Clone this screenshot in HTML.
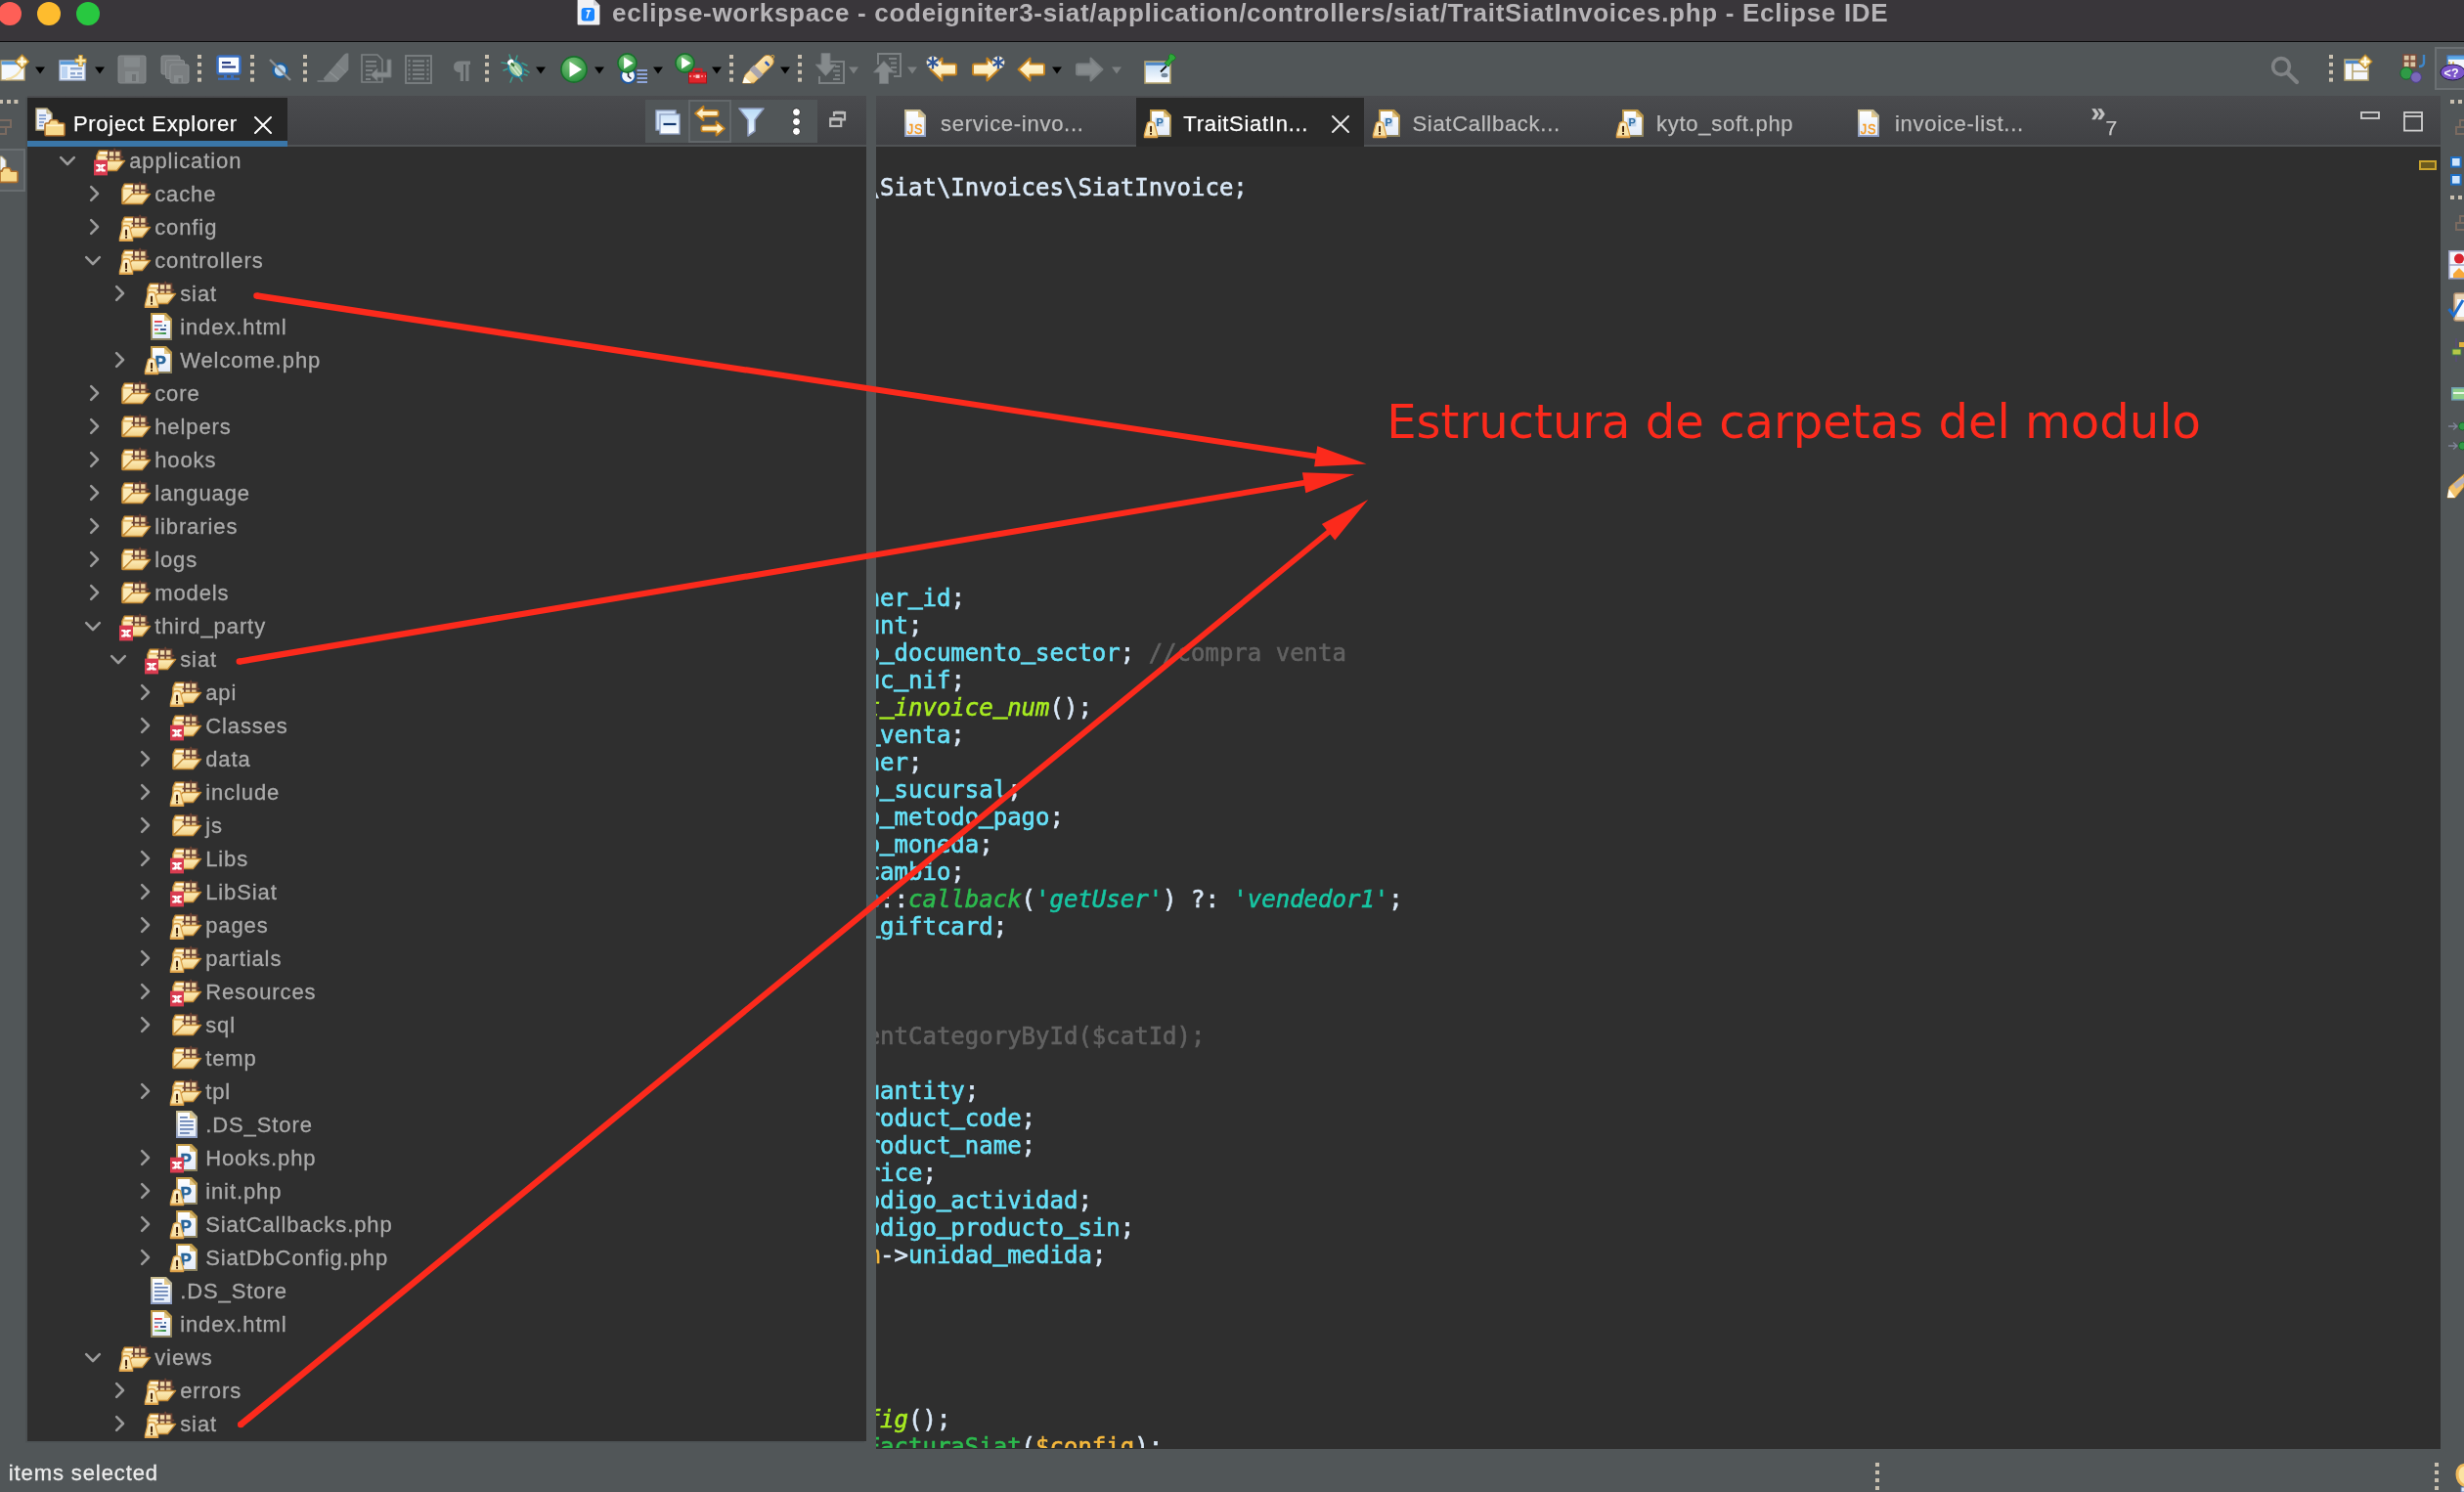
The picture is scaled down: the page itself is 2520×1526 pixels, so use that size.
<!DOCTYPE html><html><head><meta charset="utf-8"><title>Eclipse IDE</title><style>
*{margin:0;padding:0;box-sizing:content-box}
html,body{width:2520px;height:1526px;overflow:hidden;background:#515658}
body{position:relative;font-family:"Liberation Sans",sans-serif;font-size:22px;letter-spacing:.9px;color:#aaa}
.ic{position:absolute;overflow:visible}
#title{position:absolute;left:0;top:0;width:2520px;height:41.5px;background:#39363a;border-bottom:1.8px solid #0b0b0c}
#title .tx{position:absolute;left:626px;top:-3.5px;line-height:32px;font-size:26px;font-weight:bold;color:#b6b4b7;letter-spacing:.7px;white-space:nowrap}
.tlight{position:absolute;top:1.8px;width:24px;height:24px;border-radius:50%}
#pe{position:absolute;left:28px;top:98px;width:858px;height:1376px;background:#2f2f2f;overflow:hidden;box-shadow:-2px 1.5px 0 #4b5052}
#petab{position:absolute;left:0;top:0;width:858px;height:52px;background:linear-gradient(#4a4b4e,#404144);border-bottom:2px solid #505355;box-sizing:border-box}
#ed{position:absolute;left:896px;top:98px;width:1600px;height:1383.5px;background:#2f2f2f;overflow:hidden}
#edtab{position:absolute;left:0;top:0;width:1600px;height:52px;background:linear-gradient(#4a4b4e,#404144);border-bottom:2px solid #505355;box-sizing:border-box}
#code{position:absolute;left:0;top:52px;width:1600px;height:1331px;overflow:hidden}
.cl{position:absolute;left:-10.35px;height:28px;line-height:28px;font-family:"DejaVu Sans Mono","Liberation Mono",monospace;font-size:24px;letter-spacing:0;white-space:pre;-webkit-text-stroke:.6px}
.u{position:relative;top:-3.4px;-webkit-text-stroke:1.3px}
.tl{position:absolute;height:34px;line-height:34px;white-space:nowrap;color:#aaaaaa;-webkit-text-stroke:.3px}
.tt{position:absolute;height:32px;line-height:32px;white-space:nowrap;color:#bdbdbd;letter-spacing:.72px;-webkit-text-stroke:.25px}
.tt.act{color:#fff}
#wrap{position:absolute;left:0;top:0;width:2520px;height:1526px;overflow:hidden;will-change:transform}
#status{position:absolute;left:-11.4px;top:1491px;line-height:32px;color:#ececec;white-space:nowrap;-webkit-text-stroke:.3px}
</style></head><body><div id="wrap">
<div id="title"><div class="tlight" style="left:-2px;background:#fe5f57"></div><div class="tlight" style="left:38px;background:#febc2e"></div><div class="tlight" style="left:78px;background:#28c840"></div>
<svg class="ic" style="left:590px;top:-1px" width="24" height="27" viewBox="0 0 24 27" ><path d="M0.6 0 H17 L23.4 6.4 V25.4 Q23.4 26.4 22.4 26.4 H1.6 Q0.6 26.4 0.6 25.4 Z" fill="#f1f1f3"/><path d="M17 0 V6.4 H23.4 Z" fill="#cfcfd4"/><rect x="4.6" y="9" width="13.4" height="13.4" rx="3" fill="#1a86ff"/><path d="M9.6 12 H14.2 M12.4 12 L10.2 19.6" stroke="#fff" stroke-width="1.5" fill="none"/></svg>
<div class="tx">eclipse-workspace - codeigniter3-siat/application/controllers/siat/TraitSiatInvoices.php - Eclipse IDE</div></div>
<svg class="ic" style="left:0px;top:56px" width="30" height="28" viewBox="0 0 30 28" ><rect x="1" y="6" width="24" height="20" fill="#f4f8fd" stroke="#b9a471" stroke-width="1.4"/><rect x="1.6" y="6.6" width="22.8" height="3.6" fill="#5b9bd8"/><path d="M6 25 Q18 24 23 12" stroke="#f3dfa6" stroke-width="2" fill="none"/><path d="M22.5 0 L29.5 7 L22.5 14 L15.5 7 Z" fill="#e9c46a" stroke="#b8862b" stroke-width="1.2"/><path d="M22.5 2.6 V11.4 M18.1 7 H26.9" stroke="#fffbe8" stroke-width="2.4"/></svg>
<svg class="ic" style="left:36px;top:68px" width="10" height="8" viewBox="0 0 10 8" ><path d="M0 0.5 H10 L5 7.5 Z" fill="#000"/></svg>
<svg class="ic" style="left:60px;top:56px" width="30" height="28" viewBox="0 0 30 28" ><rect x="1" y="6" width="26" height="20" fill="#eef4fc" stroke="#9fb0cf" stroke-width="1.4"/><rect x="1.6" y="6.6" width="24.8" height="3.6" fill="#5b9bd8"/><rect x="3" y="12" width="6" height="12" fill="#bcd4f2"/><rect x="12" y="13" width="12" height="2.4" fill="#8ea7cf"/><rect x="12" y="18" width="5" height="2.4" fill="#8ea7cf"/><rect x="19" y="18" width="5" height="2.4" fill="#8ea7cf"/><rect x="12" y="22" width="12" height="2" fill="#8ea7cf"/><path d="M22.5 0 V12 M16.5 6 H28.5" stroke="#c8942e" stroke-width="4.6"/><path d="M22.5 1 V11 M17.5 6 H27.5" stroke="#fbe9a8" stroke-width="2.4"/></svg>
<svg class="ic" style="left:96.5px;top:68px" width="10" height="8" viewBox="0 0 10 8" ><path d="M0 0.5 H10 L5 7.5 Z" fill="#000"/></svg>
<svg class="ic" style="left:120px;top:56px" width="30" height="30" viewBox="0 0 30 30" ><rect x="1" y="1" width="28" height="28" rx="2" fill="#7a7e80" stroke="#868a8c" stroke-width="1"/><rect x="7" y="2.5" width="16" height="10" fill="#858a8c"/><rect x="8" y="17" width="14" height="11" fill="#858a8c"/><rect x="15" y="20" width="4" height="7" fill="#6e7274"/></svg>
<svg class="ic" style="left:164px;top:56px" width="30" height="30" viewBox="0 0 30 30" ><rect x="1" y="1" width="19" height="19" rx="2" fill="#7a7e80" stroke="#8b8f91" stroke-width="1"/><rect x="5" y="12" width="9" height="7" fill="#868b8d"/><rect x="5.5" y="5.5" width="19" height="19" rx="2" fill="#7a7e80" stroke="#8b8f91" stroke-width="1"/><rect x="9.5" y="16.5" width="9" height="7" fill="#868b8d"/><rect x="10" y="10" width="19" height="19" rx="2" fill="#7a7e80" stroke="#8b8f91" stroke-width="1"/><rect x="14" y="21" width="9" height="7" fill="#868b8d"/><rect x="18.5" y="24" width="3" height="4.5" fill="#6e7274"/></svg>
<svg class="ic" style="left:202px;top:56px" width="4" height="27.7" viewBox="0 0 4 27.7" ><rect x="0" y="0.0" width="4" height="4" fill="#c9c0b0"/><rect x="0" y="7.9" width="4" height="4" fill="#c9c0b0"/><rect x="0" y="15.8" width="4" height="4" fill="#c9c0b0"/><rect x="0" y="23.7" width="4" height="4" fill="#c9c0b0"/></svg>
<svg class="ic" style="left:221px;top:56px" width="26" height="27" viewBox="0 0 26 27" ><rect x="1.5" y="1.5" width="23" height="18" rx="2" fill="#fafcff" stroke="#3a6fc0" stroke-width="2.6"/><rect x="6" y="7" width="9" height="2.2" fill="#2a3f86"/><rect x="6" y="11.4" width="14" height="2.2" fill="#2a3f86"/><rect x="8" y="21" width="3" height="3" fill="#3a6fc0"/><rect x="15" y="21" width="3" height="3" fill="#3a6fc0"/><rect x="2" y="23.6" width="22" height="2.2" fill="#3a6fc0"/></svg>
<svg class="ic" style="left:256px;top:56px" width="4" height="27.7" viewBox="0 0 4 27.7" ><rect x="0" y="0.0" width="4" height="4" fill="#c9c0b0"/><rect x="0" y="7.9" width="4" height="4" fill="#c9c0b0"/><rect x="0" y="15.8" width="4" height="4" fill="#c9c0b0"/><rect x="0" y="23.7" width="4" height="4" fill="#c9c0b0"/></svg>
<svg class="ic" style="left:275px;top:60px" width="24" height="24" viewBox="0 0 24 24" ><circle cx="11.5" cy="12" r="7" fill="#bcd7ee" stroke="#1e5f9e" stroke-width="2.6"/><path d="M1 1 L22 22" stroke="#8a8f92" stroke-width="2.4"/></svg>
<svg class="ic" style="left:310px;top:56px" width="4" height="27.7" viewBox="0 0 4 27.7" ><rect x="0" y="0.0" width="4" height="4" fill="#c9c0b0"/><rect x="0" y="7.9" width="4" height="4" fill="#c9c0b0"/><rect x="0" y="15.8" width="4" height="4" fill="#c9c0b0"/><rect x="0" y="23.7" width="4" height="4" fill="#c9c0b0"/></svg>
<svg class="ic" style="left:324px;top:54px" width="33" height="30" viewBox="0 0 33 30" ><path d="M0.5 29.8 V28.3 H8 L6.8 26.2 L28 1.8 L30 0.5 H32.4 V17.5 L20.5 29.8 Z" fill="#7b8082"/><path d="M13 19.5 L22.5 27.5" stroke="#8d9294" stroke-width="1.6"/><path d="M20 11 L30 20" stroke="#858a8c" stroke-width="1.2"/></svg>
<svg class="ic" style="left:369px;top:55px" width="32" height="31" viewBox="0 0 32 31" ><path d="M1 1 H17 L22 6 V29 H1 Z" fill="none" stroke="#7c8183" stroke-width="1.6"/><path d="M5 8 H16 M5 12.5 H16 M5 17 H12 M5 21.5 H10 M5 26 H10" stroke="#7c8183" stroke-width="1.8"/><path d="M27 6 V19 H17 V15 L10 21.5 L17 28 V24 H31 V6 Z" fill="#858a8c" stroke="#6f7476" stroke-width="1"/></svg>
<svg class="ic" style="left:414px;top:56px" width="28" height="30" viewBox="0 0 28 30" ><rect x="1" y="1" width="26" height="28" fill="none" stroke="#7c8183" stroke-width="1.8"/><path d="M8 6.5 H20 M8 11 H20 M8 15.5 H20 M8 20 H20 M8 24.5 H20" stroke="#7c8183" stroke-width="1.8"/><path d="M4.5 5 V26 M23.5 5 V26" stroke="#7c8183" stroke-width="2" stroke-dasharray="2.4 2.2"/></svg>
<svg class="ic" style="left:463px;top:62px" width="19" height="22" viewBox="0 0 19 22" ><path d="M8 0.5 H18 V4 H16.5 V21 H13.2 V4 H11 V21 H7.7 V12 Q1 12 1 6.2 Q1 0.5 8 0.5 Z" fill="#7c8183"/></svg>
<svg class="ic" style="left:496px;top:56px" width="4" height="27.7" viewBox="0 0 4 27.7" ><rect x="0" y="0.0" width="4" height="4" fill="#c9c0b0"/><rect x="0" y="7.9" width="4" height="4" fill="#c9c0b0"/><rect x="0" y="15.8" width="4" height="4" fill="#c9c0b0"/><rect x="0" y="23.7" width="4" height="4" fill="#c9c0b0"/></svg>
<svg class="ic" style="left:512px;top:55px" width="31" height="31" viewBox="0 0 31 31" ><g stroke="#3f9e8f" stroke-width="1.6" fill="none" stroke-linecap="round"><path d="M9 1 L10.5 6 M17 2 L15.5 6.5 M1 9 L7 10 M3 17 L8 15 M22 9.5 L27 12 M24 16 L29 19 M12 24 L10 29 M19 23 L22 28 M24 21 L27 22"/></g><ellipse cx="15.5" cy="15.5" rx="6.6" ry="9" transform="rotate(-38 15.5 15.5)" fill="#9cc79a" stroke="#1f7fa0" stroke-width="1.8"/><path d="M11 13 L19 23 M13.5 11 L21.5 21" stroke="#dff0d8" stroke-width="1.6" opacity=".8"/><ellipse cx="10.2" cy="8.6" rx="3.4" ry="2.6" transform="rotate(-38 10.2 8.6)" fill="#fff"/><path d="M10.6 9.6 L14 12.6" stroke="#2f6b2f" stroke-width="2.2"/></svg>
<svg class="ic" style="left:548px;top:68px" width="10" height="8" viewBox="0 0 10 8" ><path d="M0 0.5 H10 L5 7.5 Z" fill="#000"/></svg>
<svg class="ic" style="left:573px;top:57px" width="28" height="28" viewBox="0 0 28 28" ><defs><radialGradient id="rg573" cx="0.4" cy="0.3" r="0.8"><stop offset="0" stop-color="#7cc47c"/><stop offset="1" stop-color="#1f8a35"/></radialGradient></defs><circle cx="14" cy="14" r="13.1" fill="url(#rg573)" stroke="#16702a" stroke-width="1.6"/><path d="M9.5 5.9 L22.1 14 L9.5 22.1 Z" fill="#fff"/></svg>
<svg class="ic" style="left:608px;top:68px" width="10" height="8" viewBox="0 0 10 8" ><path d="M0 0.5 H10 L5 7.5 Z" fill="#000"/></svg>
<svg class="ic" style="left:631px;top:55px" width="34" height="32" viewBox="0 0 34 32" ><circle cx="11.5" cy="22.5" r="7.4" fill="#f2f6fc" stroke="#1e57a0" stroke-width="2"/><path d="M11.5 18 V23 L14.5 25.5" stroke="#223" stroke-width="1.6" fill="none"/><path d="M20.5 17 H31 M20.5 21 H31 M20.5 25 H31 M20.5 29 H31" stroke="#8ea5da" stroke-width="2.2"/></svg><svg class="ic" style="left:631px;top:54px" width="21.0" height="21.0" viewBox="0 0 21.0 21.0" ><defs><radialGradient id="rg631" cx="0.4" cy="0.3" r="0.8"><stop offset="0" stop-color="#7cc47c"/><stop offset="1" stop-color="#1f8a35"/></radialGradient></defs><circle cx="10.5" cy="10.5" r="9.6" fill="url(#rg631)" stroke="#16702a" stroke-width="1.6"/><path d="M7.1 4.4 L16.6 10.5 L7.1 16.6 Z" fill="#fff"/></svg>
<svg class="ic" style="left:668px;top:68px" width="10" height="8" viewBox="0 0 10 8" ><path d="M0 0.5 H10 L5 7.5 Z" fill="#000"/></svg>
<svg class="ic" style="left:690px;top:55px" width="34" height="32" viewBox="0 0 34 32" ><rect x="14.5" y="19" width="18" height="11" fill="#e0242b" stroke="#a81218" stroke-width="1"/><path d="M19.5 19 V15.8 H27.5 V19" stroke="#d61f26" stroke-width="2" fill="none"/><path d="M15 23 H32" stroke="#f6a0a3" stroke-width="1.4" stroke-dasharray="2 2"/><rect x="21.5" y="21.5" width="4" height="3.4" fill="#f8c9cb"/></svg><svg class="ic" style="left:690px;top:54px" width="21.0" height="21.0" viewBox="0 0 21.0 21.0" ><defs><radialGradient id="rg690" cx="0.4" cy="0.3" r="0.8"><stop offset="0" stop-color="#7cc47c"/><stop offset="1" stop-color="#1f8a35"/></radialGradient></defs><circle cx="10.5" cy="10.5" r="9.6" fill="url(#rg690)" stroke="#16702a" stroke-width="1.6"/><path d="M7.1 4.4 L16.6 10.5 L7.1 16.6 Z" fill="#fff"/></svg>
<svg class="ic" style="left:728px;top:68px" width="10" height="8" viewBox="0 0 10 8" ><path d="M0 0.5 H10 L5 7.5 Z" fill="#000"/></svg>
<svg class="ic" style="left:746px;top:56px" width="4" height="27.7" viewBox="0 0 4 27.7" ><rect x="0" y="0.0" width="4" height="4" fill="#c9c0b0"/><rect x="0" y="7.9" width="4" height="4" fill="#c9c0b0"/><rect x="0" y="15.8" width="4" height="4" fill="#c9c0b0"/><rect x="0" y="23.7" width="4" height="4" fill="#c9c0b0"/></svg>
<svg class="ic" style="left:759px;top:55px" width="34" height="31" viewBox="0 0 34 31" ><defs><linearGradient id="tg" x1="0" y1="0" x2="1" y2="1"><stop offset="0" stop-color="#fffbee"/><stop offset=".6" stop-color="#f6d48c"/><stop offset="1" stop-color="#d89a3a"/></linearGradient></defs><path d="M0.5 30 L3 21.5 L22 3 Q26 -0.5 30.5 3.5 Q34 8 30.5 12 L12 30 Z" fill="url(#tg)" stroke="#c48a32" stroke-width="1"/><path d="M0.5 30 L2.4 23.6 L9.4 30 Z" fill="#fffdf2"/><path d="M12 11.6 L21.6 21.2 L17 25.8 L7.4 16.2 Z" fill="#a9a5ae"/><path d="M24.5 9 L26.8 11.3" stroke="#2d58b5" stroke-width="2.6" stroke-linecap="round"/><circle cx="31.2" cy="3" r="1.6" fill="none" stroke="#d9a441" stroke-width="1"/></svg>
<svg class="ic" style="left:798px;top:68px" width="10" height="8" viewBox="0 0 10 8" ><path d="M0 0.5 H10 L5 7.5 Z" fill="#000"/></svg>
<svg class="ic" style="left:816px;top:56px" width="4" height="27.7" viewBox="0 0 4 27.7" ><rect x="0" y="0.0" width="4" height="4" fill="#c9c0b0"/><rect x="0" y="7.9" width="4" height="4" fill="#c9c0b0"/><rect x="0" y="15.8" width="4" height="4" fill="#c9c0b0"/><rect x="0" y="23.7" width="4" height="4" fill="#c9c0b0"/></svg>
<svg class="ic" style="left:832px;top:54px" width="33" height="33" viewBox="0 0 33 33" ><path d="M9 9 H31 V31 H6 V24" fill="none" stroke="#7c8183" stroke-width="2"/><path d="M22 14 H27 M20 18.5 H27 M22 23 H27 M20 27 H27" stroke="#7c8183" stroke-width="2"/><path d="M8 0.5 H17 V12 H23 L12.5 23.5 L2 12 H8 Z" fill="#858a8c" stroke="#72777a" stroke-width="1"/></svg>
<svg class="ic" style="left:868px;top:68px" width="10" height="8" viewBox="0 0 10 8" ><path d="M0 0.5 H10 L5 7.5 Z" fill="#7c8082"/></svg>
<svg class="ic" style="left:892px;top:54px" width="31" height="33" viewBox="0 0 31 33" ><path d="M6 12 V1 H29 V24 H22" fill="none" stroke="#7c8183" stroke-width="2"/><path d="M17 6 H25 M19 10.5 H25 M19 15 H25 M21 19.5 H25" stroke="#7c8183" stroke-width="2"/><path d="M7.5 31.5 V20 H1.5 L12 8.5 L22.5 20 H16.5 V31.5 Z" fill="#858a8c" stroke="#72777a" stroke-width="1"/></svg>
<svg class="ic" style="left:928px;top:68px" width="10" height="8" viewBox="0 0 10 8" ><path d="M0 0.5 H10 L5 7.5 Z" fill="#7c8082"/></svg>
<svg class="ic" style="left:948px;top:54px" width="34" height="32" viewBox="0 0 34 32" ><defs><linearGradient id="ag948" x1="0" y1="0" x2="0" y2="1"><stop offset="0" stop-color="#fffbe9"/><stop offset="1" stop-color="#fbe3a1"/></linearGradient></defs><g transform="translate(2 4)"><path d="M1.5 13 L13.5 1.5 L13.5 7.5 H26.5 Q28 7.5 28 9 V17 Q28 18.5 26.5 18.5 H13.5 V24.5 Z" fill="url(#ag948)" stroke="#c68420" stroke-width="2" stroke-linejoin="round"/></g><circle cx="6" cy="10" r="6.4" fill="#f3ead3"/><path d="M6 3.4 V16.6 M0.5999999999999996 6.8 L11.4 13.2 M0.5999999999999996 13.2 L11.4 6.8" stroke="#2f5596" stroke-width="2.2"/></svg>
<svg class="ic" style="left:993px;top:54px" width="34" height="32" viewBox="0 0 34 32" ><defs><linearGradient id="ag993" x1="0" y1="0" x2="0" y2="1"><stop offset="0" stop-color="#fffbe9"/><stop offset="1" stop-color="#fbe3a1"/></linearGradient></defs><g transform="translate(30 4) scale(-1 1)"><path d="M1.5 13 L13.5 1.5 L13.5 7.5 H26.5 Q28 7.5 28 9 V17 Q28 18.5 26.5 18.5 H13.5 V24.5 Z" fill="url(#ag993)" stroke="#c68420" stroke-width="2" stroke-linejoin="round"/></g><circle cx="28" cy="10" r="6.4" fill="#f3ead3"/><path d="M28 3.4 V16.6 M22.6 6.8 L33.4 13.2 M22.6 13.2 L33.4 6.8" stroke="#2f5596" stroke-width="2.2"/></svg>
<svg class="ic" style="left:1038px;top:54px" width="34" height="32" viewBox="0 0 34 32" ><defs><linearGradient id="ag1038" x1="0" y1="0" x2="0" y2="1"><stop offset="0" stop-color="#fffbe9"/><stop offset="1" stop-color="#fbe3a1"/></linearGradient></defs><g transform="translate(2 4)"><path d="M1.5 13 L13.5 1.5 L13.5 7.5 H26.5 Q28 7.5 28 9 V17 Q28 18.5 26.5 18.5 H13.5 V24.5 Z" fill="url(#ag1038)" stroke="#c68420" stroke-width="2" stroke-linejoin="round"/></g></svg>
<svg class="ic" style="left:1076px;top:68px" width="10" height="8" viewBox="0 0 10 8" ><path d="M0 0.5 H10 L5 7.5 Z" fill="#000"/></svg>
<svg class="ic" style="left:1099px;top:54px" width="34" height="32" viewBox="0 0 34 32" ><g transform="translate(30 4) scale(-1 1)"><path d="M1.5 13 L13.5 1.5 L13.5 7.5 H26.5 Q28 7.5 28 9 V17 Q28 18.5 26.5 18.5 H13.5 V24.5 Z" fill="#858a8c" stroke="#7a7f81" stroke-width="2" stroke-linejoin="round"/></g></svg>
<svg class="ic" style="left:1137px;top:68px" width="10" height="8" viewBox="0 0 10 8" ><path d="M0 0.5 H10 L5 7.5 Z" fill="#7c8082"/></svg>
<svg class="ic" style="left:1170px;top:54px" width="34" height="32" viewBox="0 0 34 32" ><defs><linearGradient id="pg" x1="0" y1="0" x2="0" y2="1"><stop offset="0" stop-color="#b9d6f2"/><stop offset="1" stop-color="#ffffff"/></linearGradient></defs><rect x="1" y="9" width="26" height="22" fill="url(#pg)" stroke="#b6a571" stroke-width="1.6"/><rect x="1.8" y="9.8" width="24.4" height="3" fill="#4c86c6"/><ellipse cx="21" cy="23" rx="3.5" ry="2.2" fill="#1b3550" opacity=".55"/><path d="M17 19.5 L23 13.5" stroke="#111" stroke-width="1.8"/><path d="M21 10.5 L25.5 6 Q24 2.5 27.5 1 Q31 1.5 32.5 5 Q31.5 8 28.5 8.5 L25 14 Z" fill="#2fa83a" stroke="#157a22" stroke-width="1"/></svg>
<svg class="ic" style="left:2322px;top:57px" width="30" height="30" viewBox="0 0 30 30" ><circle cx="11" cy="11" r="8.4" fill="none" stroke="#808385" stroke-width="3.6"/><path d="M17.4 17.4 L27 27" stroke="#808385" stroke-width="4.2" stroke-linecap="round"/></svg>
<svg class="ic" style="left:2382px;top:56px" width="4" height="27.7" viewBox="0 0 4 27.7" ><rect x="0" y="0.0" width="4" height="4" fill="#c9c0b0"/><rect x="0" y="7.9" width="4" height="4" fill="#c9c0b0"/><rect x="0" y="15.8" width="4" height="4" fill="#c9c0b0"/><rect x="0" y="23.7" width="4" height="4" fill="#c9c0b0"/></svg>
<svg class="ic" style="left:2397px;top:56px" width="30" height="28" viewBox="0 0 30 28" ><rect x="1" y="5" width="24" height="21" fill="#f4f7fc" stroke="#b6a571" stroke-width="1.6"/><rect x="1.8" y="5.8" width="22.4" height="3.4" fill="#4c86c6"/><path d="M9 9 V26 M9 17 H25" stroke="#b6a571" stroke-width="1.6"/><path d="M22 0 L29 7 L22 14 L15 7 Z" fill="#e9c46a" stroke="#b8862b" stroke-width="1.2"/><path d="M22 2.6 V11.4 M17.6 7 H26.4" stroke="#fffbe8" stroke-width="2.4"/></svg>
<svg class="ic" style="left:2453px;top:55px" width="30" height="30" viewBox="0 0 30 30" ><rect x="5" y="1" width="13" height="13" fill="#d8c7a6" stroke="#7a4a3a" stroke-width="1.6"/><path d="M5 7.5 H18 M11.5 1 V14" stroke="#7a4a3a" stroke-width="1.8"/><circle cx="8" cy="20" r="6.2" fill="#2f9a46" stroke="#17682a" stroke-width="1"/><circle cx="18" cy="24" r="5.4" fill="#7a68b8" stroke="#4f4190" stroke-width="1"/><path d="M26 1 V9 Q26 13 21 13" stroke="#3f86c8" stroke-width="2.4" fill="none"/></svg>
<svg class="ic" style="left:2489.5px;top:48px" width="46" height="44" viewBox="0 0 46 44" ><rect x="1" y="1" width="44" height="42" fill="#585d60" stroke="#6b7073" stroke-width="2"/><rect x="13" y="9" width="30" height="14" fill="#f4f7fc" stroke="#3f78c0" stroke-width="1.6"/><rect x="13.8" y="9.8" width="28.4" height="3" fill="#58a8e8"/><path d="M15 15 V20 M19 15 V20" stroke="#d8b24a" stroke-width="1.6"/><ellipse cx="18.5" cy="26" rx="12.6" ry="8" fill="#7b55c9" stroke="#241a4a" stroke-width="1"/><text x="9.6" y="30.6" font-family="Liberation Sans, sans-serif" font-weight="bold" font-size="12.5" fill="#fff" letter-spacing="0">&lt;?</text></svg>
<svg class="ic" style="left:0px;top:102px" width="20" height="4" viewBox="0 0 20 4" ><rect x="0" y="0" width="3" height="4" fill="#c9c0b0"/><rect x="7" y="0" width="4" height="4" fill="#c9c0b0"/><rect x="14.4" y="0" width="4" height="4" fill="#c9c0b0"/></svg>
<svg class="ic" style="left:0px;top:121px" width="12" height="18" viewBox="0 0 12 18" ><path d="M0 2 H11 V9 H6 M0 9 H6 V16 H0" fill="none" stroke="#7a6a60" stroke-width="2"/></svg>
<div style="position:absolute;left:0;top:152px;width:26px;height:44px;box-sizing:border-box;background:#595e61;border:2px solid #686d70;border-left:none"></div>
<svg class="ic" style="left:0px;top:158px" width="20" height="30" viewBox="0 0 20 30" ><path d="M0 2 H2 L6 6 V16 H0 Z" fill="#eef2fa" stroke="#b3a47a" stroke-width="1.2"/><path d="M0 17.2 H2 L3 14.6 Q3.4 13.8 4.4 13.8 H9 Q10 13.8 10.4 14.6 L11.4 17.2 H16.6 Q18 17.2 18 18.6 V27 Q18 28.4 16.6 28.4 H0 Z" fill="#f7d98c" stroke="#b0702c" stroke-width="1.6"/></svg>
<div id="pe"><div id="petab"></div></div>
<div style="position:absolute;left:28px;top:100px;width:266px;height:44px;background:#262626"></div>
<div style="position:absolute;left:28px;top:144px;width:266px;height:6px;background:#3a76a8"></div>
<svg class="ic" style="left:35.5px;top:110px" width="31" height="30" viewBox="0 0 31 30" ><path d="M1 1 H12 L17 6 V23 H1 Z" fill="#eef2fa" stroke="#b3a47a" stroke-width="1.4"/><path d="M12 1 V6 H17 Z" fill="#d9cfa6" stroke="#b3a47a" stroke-width="1"/><path d="M4 8 H11 M4 11.5 H11 M4 15 H9 M4 18.5 H8" stroke="#6f8fc8" stroke-width="1.6"/><path d="M10 17.5 Q10 16 11.5 16 H14 L15 13.6 Q15.4 12.8 16.4 12.8 H21.6 Q22.6 12.8 23 13.6 L24 16 H28.6 Q30 16 30 17.5 V27.4 Q30 28.8 28.6 28.8 H11.4 Q10 28.8 10 27.4 Z" fill="#f7d98c" stroke="#b0702c" stroke-width="1.6"/><path d="M11.5 18.4 H28.5" stroke="#fff3cf" stroke-width="1.6"/></svg>
<div class="tt act" style="left:74.9px;top:110.5px;color:#fff">Project Explorer</div>
<svg class="ic" style="left:259.7px;top:118.5px" width="18" height="18" viewBox="0 0 18 18" ><path d="M1 1 L17 17 M17 1 L1 17" stroke="#fff" stroke-width="2" stroke-linecap="round"/></svg>
<div style="position:absolute;left:660px;top:102px;width:176px;height:44px;background:#515658"></div>
<div style="position:absolute;left:704px;top:102px;width:44px;height:44px;box-sizing:border-box;border:2px solid #62676a"></div>
<svg class="ic" style="left:670px;top:112px" width="26" height="26" viewBox="0 0 26 26" ><rect x="1" y="1" width="20" height="20" fill="#cfe0f5" stroke="#93a5c6" stroke-width="1.4"/><defs><linearGradient id="cg" x1="0" y1="0" x2="0" y2="1"><stop offset="0" stop-color="#cde3f8"/><stop offset="1" stop-color="#ffffff"/></linearGradient></defs><rect x="5" y="5" width="20" height="20" fill="url(#cg)" stroke="#93a5c6" stroke-width="1.4"/><path d="M8.5 15 H21.5" stroke="#12386f" stroke-width="2.2"/></svg>
<svg class="ic" style="left:710px;top:108px" width="33" height="32" viewBox="0 0 33 32" ><defs><linearGradient id="lg" x1="0" y1="0" x2="0" y2="1"><stop offset="0" stop-color="#fffbe9"/><stop offset="1" stop-color="#fbe3a1"/></linearGradient></defs><path d="M1 8 L9.5 0.8 L9.5 5.2 H23 Q24.6 5.2 24.6 6.8 V9.2 Q24.6 10.8 23 10.8 H9.5 V15.2 Z" fill="url(#lg)" stroke="#c68420" stroke-width="1.8" stroke-linejoin="round"/><g transform="translate(32 15.5) scale(-1 1)"><path d="M1 8 L9.5 0.8 L9.5 5.2 H23 Q24.6 5.2 24.6 6.8 V9.2 Q24.6 10.8 23 10.8 H9.5 V15.2 Z" fill="url(#lg)" stroke="#c68420" stroke-width="1.8" stroke-linejoin="round"/></g></svg>
<svg class="ic" style="left:755px;top:110px" width="27" height="30" viewBox="0 0 27 30" ><defs><linearGradient id="fg" x1="0" y1="0" x2="0" y2="1"><stop offset="0" stop-color="#b9dcf7"/><stop offset="1" stop-color="#eef7ff"/></linearGradient></defs><path d="M1 1 H26 L17 12.5 V24 L10 29 V12.5 Z" fill="url(#fg)" stroke="#8e9cbd" stroke-width="1.6" stroke-linejoin="round"/></svg>
<svg class="ic" style="left:809px;top:110px" width="11" height="30" viewBox="0 0 11 30" ><circle cx="5.5" cy="4.7" r="4" fill="#fff" stroke="#111" stroke-width=".8"/><circle cx="5.5" cy="14.5" r="4" fill="#fff" stroke="#111" stroke-width=".8"/><circle cx="5.5" cy="24.4" r="4" fill="#fff" stroke="#111" stroke-width=".8"/></svg>
<svg class="ic" style="left:847.5px;top:113.5px" width="18" height="17" viewBox="0 0 18 17" ><path d="M5 5 V1.2 H16 V8.4 H12.6" fill="none" stroke="#b9b9b9" stroke-width="2.2"/><path d="M6 1.2 H15" stroke="#b9b9b9" stroke-width="3"/><rect x="1.2" y="7.4" width="11" height="7.6" fill="none" stroke="#b9b9b9" stroke-width="2.2"/><path d="M1.2 8 H12" stroke="#b9b9b9" stroke-width="3"/></svg>
<div id="tree" style="position:absolute;left:0;top:150px;width:886px;height:1324px;overflow:hidden"><div style="position:absolute;left:0;top:-150px">
<svg class="ic" style="left:59px;top:157.9px" width="20" height="14" viewBox="0 0 20 14" ><path d="M3.2 3.2 L10 10 L16.8 3.2" stroke="#9b9b9b" stroke-width="2.6" fill="none" stroke-linecap="round" stroke-linejoin="round"/></svg>
<svg class="ic" style="left:95.8px;top:152.4px" width="34" height="30" viewBox="0 0 34 30" ><defs><linearGradient id="fg1" x1="0" y1="0" x2="0" y2="1"><stop offset="0" stop-color="#fdeebd"/><stop offset="1" stop-color="#f2d084"/></linearGradient><linearGradient id="fg2" x1="0" y1="0" x2="1" y2="1"><stop offset="0" stop-color="#f9e9bb"/><stop offset="1" stop-color="#e3c288"/></linearGradient></defs><path d="M2.9 22 L2.9 7.2 L5.2 2.2 L14.6 2.2 L14.6 13 Z" fill="#f5d993" stroke="#c58a35" stroke-width="1.4" stroke-linejoin="round"/><path d="M6.2 3.6 H14 V5.4 H6.2 Z" fill="#fffdf4"/><path d="M4.2 7.6 H14 V12 L4.2 20 Z" fill="#fbeab8"/><path d="M3.4 6.9 H14" stroke="#d9a550" stroke-width="1"/><rect x="15" y="2" width="12.4" height="10" fill="url(#fg2)"/><path d="M14 2.3 H28.2 M12.6 8.7 H30.2 M14.9 1.4 V12 M21.2 -0.2 V12 M27.4 1.4 V12" stroke="#6d4435" stroke-width="1.8" fill="none"/><path d="M3.5 22.6 L13 12.4 L31.6 12.4 L23.4 22.6 Z" fill="url(#fg1)" stroke="#c58a35" stroke-width="1.5" stroke-linejoin="round"/><g transform="translate(0 0)"><rect x="0" y="11.6" width="14" height="15.8" fill="#d93c50"/><path d="M2.2 16 H6 L7 17.2 L8 16 H11.8 V17.8 H10.6 L8.8 19.7 L10.6 21.6 H11.8 V23.4 H8 L7 22.2 L6 23.4 H2.2 V21.6 H3.4 L5.2 19.7 L3.4 17.8 H2.2 Z" fill="#fff"/><rect x="6" y="18.6" width="2" height="2.2" fill="#f3b6be"/></g></svg>
<div class="tl" style="left:132.2px;top:147.5px">application</div>
<svg class="ic" style="left:90px;top:187.7px" width="14" height="20" viewBox="0 0 14 20" ><path d="M3.2 3.2 L10 10 L3.2 16.8" stroke="#9b9b9b" stroke-width="2.6" fill="none" stroke-linecap="round" stroke-linejoin="round"/></svg>
<svg class="ic" style="left:121.8px;top:186.4px" width="34" height="30" viewBox="0 0 34 30" ><defs><linearGradient id="fg1" x1="0" y1="0" x2="0" y2="1"><stop offset="0" stop-color="#fdeebd"/><stop offset="1" stop-color="#f2d084"/></linearGradient><linearGradient id="fg2" x1="0" y1="0" x2="1" y2="1"><stop offset="0" stop-color="#f9e9bb"/><stop offset="1" stop-color="#e3c288"/></linearGradient></defs><path d="M2.9 22 L2.9 7.2 L5.2 2.2 L14.6 2.2 L14.6 13 Z" fill="#f5d993" stroke="#c58a35" stroke-width="1.4" stroke-linejoin="round"/><path d="M6.2 3.6 H14 V5.4 H6.2 Z" fill="#fffdf4"/><path d="M4.2 7.6 H14 V12 L4.2 20 Z" fill="#fbeab8"/><path d="M3.4 6.9 H14" stroke="#d9a550" stroke-width="1"/><rect x="15" y="2" width="12.4" height="10" fill="url(#fg2)"/><path d="M14 2.3 H28.2 M12.6 8.7 H30.2 M14.9 1.4 V12 M21.2 -0.2 V12 M27.4 1.4 V12" stroke="#6d4435" stroke-width="1.8" fill="none"/><path d="M3.5 22.6 L13 12.4 L31.6 12.4 L23.4 22.6 Z" fill="url(#fg1)" stroke="#c58a35" stroke-width="1.5" stroke-linejoin="round"/></svg>
<div class="tl" style="left:158.2px;top:181.5px">cache</div>
<svg class="ic" style="left:90px;top:221.7px" width="14" height="20" viewBox="0 0 14 20" ><path d="M3.2 3.2 L10 10 L3.2 16.8" stroke="#9b9b9b" stroke-width="2.6" fill="none" stroke-linecap="round" stroke-linejoin="round"/></svg>
<svg class="ic" style="left:121.8px;top:220.4px" width="34" height="30" viewBox="0 0 34 30" ><defs><linearGradient id="fg1" x1="0" y1="0" x2="0" y2="1"><stop offset="0" stop-color="#fdeebd"/><stop offset="1" stop-color="#f2d084"/></linearGradient><linearGradient id="fg2" x1="0" y1="0" x2="1" y2="1"><stop offset="0" stop-color="#f9e9bb"/><stop offset="1" stop-color="#e3c288"/></linearGradient></defs><path d="M2.9 22 L2.9 7.2 L5.2 2.2 L14.6 2.2 L14.6 13 Z" fill="#f5d993" stroke="#c58a35" stroke-width="1.4" stroke-linejoin="round"/><path d="M6.2 3.6 H14 V5.4 H6.2 Z" fill="#fffdf4"/><path d="M4.2 7.6 H14 V12 L4.2 20 Z" fill="#fbeab8"/><path d="M3.4 6.9 H14" stroke="#d9a550" stroke-width="1"/><rect x="15" y="2" width="12.4" height="10" fill="url(#fg2)"/><path d="M14 2.3 H28.2 M12.6 8.7 H30.2 M14.9 1.4 V12 M21.2 -0.2 V12 M27.4 1.4 V12" stroke="#6d4435" stroke-width="1.8" fill="none"/><path d="M3.5 22.6 L13 12.4 L31.6 12.4 L23.4 22.6 Z" fill="url(#fg1)" stroke="#c58a35" stroke-width="1.5" stroke-linejoin="round"/><g transform="translate(0 0)"><path d="M3.6 11.4 Q7 9.6 10.4 11.4 L13.6 23.6 V26.4 H0.4 V23.6 Z" fill="#f7e2a8" stroke="#dba048" stroke-width="1.3" stroke-linejoin="round"/><path d="M1 24.6 H13 V26 H1 Z" fill="#e3a750"/><path d="M4.6 12.6 Q7 11.4 9.4 12.6 L10.2 15.4 H3.8 Z" fill="#fdf4dc" opacity=".8"/><rect x="6.1" y="14.8" width="1.9" height="6" fill="#3d1c05"/><rect x="6.1" y="21.8" width="1.9" height="1.9" fill="#3d1c05"/></g></svg>
<div class="tl" style="left:158.2px;top:215.5px">config</div>
<svg class="ic" style="left:85px;top:259.9px" width="20" height="14" viewBox="0 0 20 14" ><path d="M3.2 3.2 L10 10 L16.8 3.2" stroke="#9b9b9b" stroke-width="2.6" fill="none" stroke-linecap="round" stroke-linejoin="round"/></svg>
<svg class="ic" style="left:121.8px;top:254.4px" width="34" height="30" viewBox="0 0 34 30" ><defs><linearGradient id="fg1" x1="0" y1="0" x2="0" y2="1"><stop offset="0" stop-color="#fdeebd"/><stop offset="1" stop-color="#f2d084"/></linearGradient><linearGradient id="fg2" x1="0" y1="0" x2="1" y2="1"><stop offset="0" stop-color="#f9e9bb"/><stop offset="1" stop-color="#e3c288"/></linearGradient></defs><path d="M2.9 22 L2.9 7.2 L5.2 2.2 L14.6 2.2 L14.6 13 Z" fill="#f5d993" stroke="#c58a35" stroke-width="1.4" stroke-linejoin="round"/><path d="M6.2 3.6 H14 V5.4 H6.2 Z" fill="#fffdf4"/><path d="M4.2 7.6 H14 V12 L4.2 20 Z" fill="#fbeab8"/><path d="M3.4 6.9 H14" stroke="#d9a550" stroke-width="1"/><rect x="15" y="2" width="12.4" height="10" fill="url(#fg2)"/><path d="M14 2.3 H28.2 M12.6 8.7 H30.2 M14.9 1.4 V12 M21.2 -0.2 V12 M27.4 1.4 V12" stroke="#6d4435" stroke-width="1.8" fill="none"/><path d="M3.5 22.6 L13 12.4 L31.6 12.4 L23.4 22.6 Z" fill="url(#fg1)" stroke="#c58a35" stroke-width="1.5" stroke-linejoin="round"/><g transform="translate(0 0)"><path d="M3.6 11.4 Q7 9.6 10.4 11.4 L13.6 23.6 V26.4 H0.4 V23.6 Z" fill="#f7e2a8" stroke="#dba048" stroke-width="1.3" stroke-linejoin="round"/><path d="M1 24.6 H13 V26 H1 Z" fill="#e3a750"/><path d="M4.6 12.6 Q7 11.4 9.4 12.6 L10.2 15.4 H3.8 Z" fill="#fdf4dc" opacity=".8"/><rect x="6.1" y="14.8" width="1.9" height="6" fill="#3d1c05"/><rect x="6.1" y="21.8" width="1.9" height="1.9" fill="#3d1c05"/></g></svg>
<div class="tl" style="left:158.2px;top:249.5px">controllers</div>
<svg class="ic" style="left:116px;top:289.7px" width="14" height="20" viewBox="0 0 14 20" ><path d="M3.2 3.2 L10 10 L3.2 16.8" stroke="#9b9b9b" stroke-width="2.6" fill="none" stroke-linecap="round" stroke-linejoin="round"/></svg>
<svg class="ic" style="left:147.8px;top:288.4px" width="34" height="30" viewBox="0 0 34 30" ><defs><linearGradient id="fg1" x1="0" y1="0" x2="0" y2="1"><stop offset="0" stop-color="#fdeebd"/><stop offset="1" stop-color="#f2d084"/></linearGradient><linearGradient id="fg2" x1="0" y1="0" x2="1" y2="1"><stop offset="0" stop-color="#f9e9bb"/><stop offset="1" stop-color="#e3c288"/></linearGradient></defs><path d="M2.9 22 L2.9 7.2 L5.2 2.2 L14.6 2.2 L14.6 13 Z" fill="#f5d993" stroke="#c58a35" stroke-width="1.4" stroke-linejoin="round"/><path d="M6.2 3.6 H14 V5.4 H6.2 Z" fill="#fffdf4"/><path d="M4.2 7.6 H14 V12 L4.2 20 Z" fill="#fbeab8"/><path d="M3.4 6.9 H14" stroke="#d9a550" stroke-width="1"/><rect x="15" y="2" width="12.4" height="10" fill="url(#fg2)"/><path d="M14 2.3 H28.2 M12.6 8.7 H30.2 M14.9 1.4 V12 M21.2 -0.2 V12 M27.4 1.4 V12" stroke="#6d4435" stroke-width="1.8" fill="none"/><path d="M3.5 22.6 L13 12.4 L31.6 12.4 L23.4 22.6 Z" fill="url(#fg1)" stroke="#c58a35" stroke-width="1.5" stroke-linejoin="round"/><g transform="translate(0 0)"><path d="M3.6 11.4 Q7 9.6 10.4 11.4 L13.6 23.6 V26.4 H0.4 V23.6 Z" fill="#f7e2a8" stroke="#dba048" stroke-width="1.3" stroke-linejoin="round"/><path d="M1 24.6 H13 V26 H1 Z" fill="#e3a750"/><path d="M4.6 12.6 Q7 11.4 9.4 12.6 L10.2 15.4 H3.8 Z" fill="#fdf4dc" opacity=".8"/><rect x="6.1" y="14.8" width="1.9" height="6" fill="#3d1c05"/><rect x="6.1" y="21.8" width="1.9" height="1.9" fill="#3d1c05"/></g></svg>
<div class="tl" style="left:184.2px;top:283.5px">siat</div>
<svg class="ic" style="left:147.8px;top:320.3px" width="34" height="30" viewBox="0 0 34 30" ><defs><linearGradient id="pb2" x1="0" y1="0" x2="0" y2="1"><stop offset="0" stop-color="#c59c46"/><stop offset="1" stop-color="#8a815f"/></linearGradient><linearGradient id="pin" x1="0" y1="0" x2="0" y2="1"><stop offset="0" stop-color="#ffffff"/><stop offset="1" stop-color="#e3ebf9"/></linearGradient></defs><path d="M6 0 H22 L28 6 V28 H6 Z" fill="url(#pb2)"/><path d="M7.9 1.9 H20 V8 H26.1 V26.1 H7.9 Z" fill="url(#pin)"/><path d="M20 1.9 L26.1 8 H20 Z" fill="#e6c987"/><defs><linearGradient id="hg" x1="0" y1="0" x2="1" y2="0"><stop offset="0" stop-color="#a8d26e"/><stop offset="1" stop-color="#0d7a2f"/></linearGradient></defs><rect x="10" y="8" width="7.8" height="1.8" fill="#e5404b"/><rect x="10" y="12" width="7.8" height="1.8" fill="#7390b8"/><rect x="20" y="12" width="1.8" height="1.8" fill="#2a5590"/><rect x="10" y="16.1" width="3.8" height="1.8" fill="#f0525a"/><rect x="16" y="16.1" width="5.8" height="1.8" fill="#21407f"/><rect x="10" y="20.1" width="11.8" height="1.8" fill="url(#hg)"/></svg>
<div class="tl" style="left:184.2px;top:317.5px">index.html</div>
<svg class="ic" style="left:116px;top:357.7px" width="14" height="20" viewBox="0 0 14 20" ><path d="M3.2 3.2 L10 10 L3.2 16.8" stroke="#9b9b9b" stroke-width="2.6" fill="none" stroke-linecap="round" stroke-linejoin="round"/></svg>
<svg class="ic" style="left:147.8px;top:354.3px" width="34" height="30" viewBox="0 0 34 30" ><defs><linearGradient id="pb2" x1="0" y1="0" x2="0" y2="1"><stop offset="0" stop-color="#c59c46"/><stop offset="1" stop-color="#8a815f"/></linearGradient><linearGradient id="pin" x1="0" y1="0" x2="0" y2="1"><stop offset="0" stop-color="#ffffff"/><stop offset="1" stop-color="#e3ebf9"/></linearGradient></defs><path d="M6 0 H22 L28 6 V28 H6 Z" fill="url(#pb2)"/><path d="M7.9 1.9 H20 V8 H26.1 V26.1 H7.9 Z" fill="url(#pin)"/><path d="M20 1.9 L26.1 8 H20 Z" fill="#e6c987"/><text x="10.6" y="21.6" font-family="Liberation Sans, sans-serif" font-weight="bold" font-size="17" fill="#28659a" stroke="#28659a" stroke-width=".5">P</text><g transform="translate(0 2.1)"><path d="M3.6 11.4 Q7 9.6 10.4 11.4 L13.6 23.6 V26.4 H0.4 V23.6 Z" fill="#f7e2a8" stroke="#dba048" stroke-width="1.3" stroke-linejoin="round"/><path d="M1 24.6 H13 V26 H1 Z" fill="#e3a750"/><path d="M4.6 12.6 Q7 11.4 9.4 12.6 L10.2 15.4 H3.8 Z" fill="#fdf4dc" opacity=".8"/><rect x="6.1" y="14.8" width="1.9" height="6" fill="#3d1c05"/><rect x="6.1" y="21.8" width="1.9" height="1.9" fill="#3d1c05"/></g></svg>
<div class="tl" style="left:184.2px;top:351.5px">Welcome.php</div>
<svg class="ic" style="left:90px;top:391.7px" width="14" height="20" viewBox="0 0 14 20" ><path d="M3.2 3.2 L10 10 L3.2 16.8" stroke="#9b9b9b" stroke-width="2.6" fill="none" stroke-linecap="round" stroke-linejoin="round"/></svg>
<svg class="ic" style="left:121.8px;top:390.4px" width="34" height="30" viewBox="0 0 34 30" ><defs><linearGradient id="fg1" x1="0" y1="0" x2="0" y2="1"><stop offset="0" stop-color="#fdeebd"/><stop offset="1" stop-color="#f2d084"/></linearGradient><linearGradient id="fg2" x1="0" y1="0" x2="1" y2="1"><stop offset="0" stop-color="#f9e9bb"/><stop offset="1" stop-color="#e3c288"/></linearGradient></defs><path d="M2.9 22 L2.9 7.2 L5.2 2.2 L14.6 2.2 L14.6 13 Z" fill="#f5d993" stroke="#c58a35" stroke-width="1.4" stroke-linejoin="round"/><path d="M6.2 3.6 H14 V5.4 H6.2 Z" fill="#fffdf4"/><path d="M4.2 7.6 H14 V12 L4.2 20 Z" fill="#fbeab8"/><path d="M3.4 6.9 H14" stroke="#d9a550" stroke-width="1"/><rect x="15" y="2" width="12.4" height="10" fill="url(#fg2)"/><path d="M14 2.3 H28.2 M12.6 8.7 H30.2 M14.9 1.4 V12 M21.2 -0.2 V12 M27.4 1.4 V12" stroke="#6d4435" stroke-width="1.8" fill="none"/><path d="M3.5 22.6 L13 12.4 L31.6 12.4 L23.4 22.6 Z" fill="url(#fg1)" stroke="#c58a35" stroke-width="1.5" stroke-linejoin="round"/></svg>
<div class="tl" style="left:158.2px;top:385.5px">core</div>
<svg class="ic" style="left:90px;top:425.7px" width="14" height="20" viewBox="0 0 14 20" ><path d="M3.2 3.2 L10 10 L3.2 16.8" stroke="#9b9b9b" stroke-width="2.6" fill="none" stroke-linecap="round" stroke-linejoin="round"/></svg>
<svg class="ic" style="left:121.8px;top:424.4px" width="34" height="30" viewBox="0 0 34 30" ><defs><linearGradient id="fg1" x1="0" y1="0" x2="0" y2="1"><stop offset="0" stop-color="#fdeebd"/><stop offset="1" stop-color="#f2d084"/></linearGradient><linearGradient id="fg2" x1="0" y1="0" x2="1" y2="1"><stop offset="0" stop-color="#f9e9bb"/><stop offset="1" stop-color="#e3c288"/></linearGradient></defs><path d="M2.9 22 L2.9 7.2 L5.2 2.2 L14.6 2.2 L14.6 13 Z" fill="#f5d993" stroke="#c58a35" stroke-width="1.4" stroke-linejoin="round"/><path d="M6.2 3.6 H14 V5.4 H6.2 Z" fill="#fffdf4"/><path d="M4.2 7.6 H14 V12 L4.2 20 Z" fill="#fbeab8"/><path d="M3.4 6.9 H14" stroke="#d9a550" stroke-width="1"/><rect x="15" y="2" width="12.4" height="10" fill="url(#fg2)"/><path d="M14 2.3 H28.2 M12.6 8.7 H30.2 M14.9 1.4 V12 M21.2 -0.2 V12 M27.4 1.4 V12" stroke="#6d4435" stroke-width="1.8" fill="none"/><path d="M3.5 22.6 L13 12.4 L31.6 12.4 L23.4 22.6 Z" fill="url(#fg1)" stroke="#c58a35" stroke-width="1.5" stroke-linejoin="round"/></svg>
<div class="tl" style="left:158.2px;top:419.5px">helpers</div>
<svg class="ic" style="left:90px;top:459.7px" width="14" height="20" viewBox="0 0 14 20" ><path d="M3.2 3.2 L10 10 L3.2 16.8" stroke="#9b9b9b" stroke-width="2.6" fill="none" stroke-linecap="round" stroke-linejoin="round"/></svg>
<svg class="ic" style="left:121.8px;top:458.4px" width="34" height="30" viewBox="0 0 34 30" ><defs><linearGradient id="fg1" x1="0" y1="0" x2="0" y2="1"><stop offset="0" stop-color="#fdeebd"/><stop offset="1" stop-color="#f2d084"/></linearGradient><linearGradient id="fg2" x1="0" y1="0" x2="1" y2="1"><stop offset="0" stop-color="#f9e9bb"/><stop offset="1" stop-color="#e3c288"/></linearGradient></defs><path d="M2.9 22 L2.9 7.2 L5.2 2.2 L14.6 2.2 L14.6 13 Z" fill="#f5d993" stroke="#c58a35" stroke-width="1.4" stroke-linejoin="round"/><path d="M6.2 3.6 H14 V5.4 H6.2 Z" fill="#fffdf4"/><path d="M4.2 7.6 H14 V12 L4.2 20 Z" fill="#fbeab8"/><path d="M3.4 6.9 H14" stroke="#d9a550" stroke-width="1"/><rect x="15" y="2" width="12.4" height="10" fill="url(#fg2)"/><path d="M14 2.3 H28.2 M12.6 8.7 H30.2 M14.9 1.4 V12 M21.2 -0.2 V12 M27.4 1.4 V12" stroke="#6d4435" stroke-width="1.8" fill="none"/><path d="M3.5 22.6 L13 12.4 L31.6 12.4 L23.4 22.6 Z" fill="url(#fg1)" stroke="#c58a35" stroke-width="1.5" stroke-linejoin="round"/></svg>
<div class="tl" style="left:158.2px;top:453.5px">hooks</div>
<svg class="ic" style="left:90px;top:493.7px" width="14" height="20" viewBox="0 0 14 20" ><path d="M3.2 3.2 L10 10 L3.2 16.8" stroke="#9b9b9b" stroke-width="2.6" fill="none" stroke-linecap="round" stroke-linejoin="round"/></svg>
<svg class="ic" style="left:121.8px;top:492.4px" width="34" height="30" viewBox="0 0 34 30" ><defs><linearGradient id="fg1" x1="0" y1="0" x2="0" y2="1"><stop offset="0" stop-color="#fdeebd"/><stop offset="1" stop-color="#f2d084"/></linearGradient><linearGradient id="fg2" x1="0" y1="0" x2="1" y2="1"><stop offset="0" stop-color="#f9e9bb"/><stop offset="1" stop-color="#e3c288"/></linearGradient></defs><path d="M2.9 22 L2.9 7.2 L5.2 2.2 L14.6 2.2 L14.6 13 Z" fill="#f5d993" stroke="#c58a35" stroke-width="1.4" stroke-linejoin="round"/><path d="M6.2 3.6 H14 V5.4 H6.2 Z" fill="#fffdf4"/><path d="M4.2 7.6 H14 V12 L4.2 20 Z" fill="#fbeab8"/><path d="M3.4 6.9 H14" stroke="#d9a550" stroke-width="1"/><rect x="15" y="2" width="12.4" height="10" fill="url(#fg2)"/><path d="M14 2.3 H28.2 M12.6 8.7 H30.2 M14.9 1.4 V12 M21.2 -0.2 V12 M27.4 1.4 V12" stroke="#6d4435" stroke-width="1.8" fill="none"/><path d="M3.5 22.6 L13 12.4 L31.6 12.4 L23.4 22.6 Z" fill="url(#fg1)" stroke="#c58a35" stroke-width="1.5" stroke-linejoin="round"/></svg>
<div class="tl" style="left:158.2px;top:487.5px">language</div>
<svg class="ic" style="left:90px;top:527.7px" width="14" height="20" viewBox="0 0 14 20" ><path d="M3.2 3.2 L10 10 L3.2 16.8" stroke="#9b9b9b" stroke-width="2.6" fill="none" stroke-linecap="round" stroke-linejoin="round"/></svg>
<svg class="ic" style="left:121.8px;top:526.4px" width="34" height="30" viewBox="0 0 34 30" ><defs><linearGradient id="fg1" x1="0" y1="0" x2="0" y2="1"><stop offset="0" stop-color="#fdeebd"/><stop offset="1" stop-color="#f2d084"/></linearGradient><linearGradient id="fg2" x1="0" y1="0" x2="1" y2="1"><stop offset="0" stop-color="#f9e9bb"/><stop offset="1" stop-color="#e3c288"/></linearGradient></defs><path d="M2.9 22 L2.9 7.2 L5.2 2.2 L14.6 2.2 L14.6 13 Z" fill="#f5d993" stroke="#c58a35" stroke-width="1.4" stroke-linejoin="round"/><path d="M6.2 3.6 H14 V5.4 H6.2 Z" fill="#fffdf4"/><path d="M4.2 7.6 H14 V12 L4.2 20 Z" fill="#fbeab8"/><path d="M3.4 6.9 H14" stroke="#d9a550" stroke-width="1"/><rect x="15" y="2" width="12.4" height="10" fill="url(#fg2)"/><path d="M14 2.3 H28.2 M12.6 8.7 H30.2 M14.9 1.4 V12 M21.2 -0.2 V12 M27.4 1.4 V12" stroke="#6d4435" stroke-width="1.8" fill="none"/><path d="M3.5 22.6 L13 12.4 L31.6 12.4 L23.4 22.6 Z" fill="url(#fg1)" stroke="#c58a35" stroke-width="1.5" stroke-linejoin="round"/></svg>
<div class="tl" style="left:158.2px;top:521.5px">libraries</div>
<svg class="ic" style="left:90px;top:561.7px" width="14" height="20" viewBox="0 0 14 20" ><path d="M3.2 3.2 L10 10 L3.2 16.8" stroke="#9b9b9b" stroke-width="2.6" fill="none" stroke-linecap="round" stroke-linejoin="round"/></svg>
<svg class="ic" style="left:121.8px;top:560.4px" width="34" height="30" viewBox="0 0 34 30" ><defs><linearGradient id="fg1" x1="0" y1="0" x2="0" y2="1"><stop offset="0" stop-color="#fdeebd"/><stop offset="1" stop-color="#f2d084"/></linearGradient><linearGradient id="fg2" x1="0" y1="0" x2="1" y2="1"><stop offset="0" stop-color="#f9e9bb"/><stop offset="1" stop-color="#e3c288"/></linearGradient></defs><path d="M2.9 22 L2.9 7.2 L5.2 2.2 L14.6 2.2 L14.6 13 Z" fill="#f5d993" stroke="#c58a35" stroke-width="1.4" stroke-linejoin="round"/><path d="M6.2 3.6 H14 V5.4 H6.2 Z" fill="#fffdf4"/><path d="M4.2 7.6 H14 V12 L4.2 20 Z" fill="#fbeab8"/><path d="M3.4 6.9 H14" stroke="#d9a550" stroke-width="1"/><rect x="15" y="2" width="12.4" height="10" fill="url(#fg2)"/><path d="M14 2.3 H28.2 M12.6 8.7 H30.2 M14.9 1.4 V12 M21.2 -0.2 V12 M27.4 1.4 V12" stroke="#6d4435" stroke-width="1.8" fill="none"/><path d="M3.5 22.6 L13 12.4 L31.6 12.4 L23.4 22.6 Z" fill="url(#fg1)" stroke="#c58a35" stroke-width="1.5" stroke-linejoin="round"/></svg>
<div class="tl" style="left:158.2px;top:555.5px">logs</div>
<svg class="ic" style="left:90px;top:595.7px" width="14" height="20" viewBox="0 0 14 20" ><path d="M3.2 3.2 L10 10 L3.2 16.8" stroke="#9b9b9b" stroke-width="2.6" fill="none" stroke-linecap="round" stroke-linejoin="round"/></svg>
<svg class="ic" style="left:121.8px;top:594.4px" width="34" height="30" viewBox="0 0 34 30" ><defs><linearGradient id="fg1" x1="0" y1="0" x2="0" y2="1"><stop offset="0" stop-color="#fdeebd"/><stop offset="1" stop-color="#f2d084"/></linearGradient><linearGradient id="fg2" x1="0" y1="0" x2="1" y2="1"><stop offset="0" stop-color="#f9e9bb"/><stop offset="1" stop-color="#e3c288"/></linearGradient></defs><path d="M2.9 22 L2.9 7.2 L5.2 2.2 L14.6 2.2 L14.6 13 Z" fill="#f5d993" stroke="#c58a35" stroke-width="1.4" stroke-linejoin="round"/><path d="M6.2 3.6 H14 V5.4 H6.2 Z" fill="#fffdf4"/><path d="M4.2 7.6 H14 V12 L4.2 20 Z" fill="#fbeab8"/><path d="M3.4 6.9 H14" stroke="#d9a550" stroke-width="1"/><rect x="15" y="2" width="12.4" height="10" fill="url(#fg2)"/><path d="M14 2.3 H28.2 M12.6 8.7 H30.2 M14.9 1.4 V12 M21.2 -0.2 V12 M27.4 1.4 V12" stroke="#6d4435" stroke-width="1.8" fill="none"/><path d="M3.5 22.6 L13 12.4 L31.6 12.4 L23.4 22.6 Z" fill="url(#fg1)" stroke="#c58a35" stroke-width="1.5" stroke-linejoin="round"/></svg>
<div class="tl" style="left:158.2px;top:589.5px">models</div>
<svg class="ic" style="left:85px;top:633.9px" width="20" height="14" viewBox="0 0 20 14" ><path d="M3.2 3.2 L10 10 L16.8 3.2" stroke="#9b9b9b" stroke-width="2.6" fill="none" stroke-linecap="round" stroke-linejoin="round"/></svg>
<svg class="ic" style="left:121.8px;top:628.4px" width="34" height="30" viewBox="0 0 34 30" ><defs><linearGradient id="fg1" x1="0" y1="0" x2="0" y2="1"><stop offset="0" stop-color="#fdeebd"/><stop offset="1" stop-color="#f2d084"/></linearGradient><linearGradient id="fg2" x1="0" y1="0" x2="1" y2="1"><stop offset="0" stop-color="#f9e9bb"/><stop offset="1" stop-color="#e3c288"/></linearGradient></defs><path d="M2.9 22 L2.9 7.2 L5.2 2.2 L14.6 2.2 L14.6 13 Z" fill="#f5d993" stroke="#c58a35" stroke-width="1.4" stroke-linejoin="round"/><path d="M6.2 3.6 H14 V5.4 H6.2 Z" fill="#fffdf4"/><path d="M4.2 7.6 H14 V12 L4.2 20 Z" fill="#fbeab8"/><path d="M3.4 6.9 H14" stroke="#d9a550" stroke-width="1"/><rect x="15" y="2" width="12.4" height="10" fill="url(#fg2)"/><path d="M14 2.3 H28.2 M12.6 8.7 H30.2 M14.9 1.4 V12 M21.2 -0.2 V12 M27.4 1.4 V12" stroke="#6d4435" stroke-width="1.8" fill="none"/><path d="M3.5 22.6 L13 12.4 L31.6 12.4 L23.4 22.6 Z" fill="url(#fg1)" stroke="#c58a35" stroke-width="1.5" stroke-linejoin="round"/><g transform="translate(0 0)"><rect x="0" y="11.6" width="14" height="15.8" fill="#d93c50"/><path d="M2.2 16 H6 L7 17.2 L8 16 H11.8 V17.8 H10.6 L8.8 19.7 L10.6 21.6 H11.8 V23.4 H8 L7 22.2 L6 23.4 H2.2 V21.6 H3.4 L5.2 19.7 L3.4 17.8 H2.2 Z" fill="#fff"/><rect x="6" y="18.6" width="2" height="2.2" fill="#f3b6be"/></g></svg>
<div class="tl" style="left:158.2px;top:623.5px">third_party</div>
<svg class="ic" style="left:111px;top:667.9px" width="20" height="14" viewBox="0 0 20 14" ><path d="M3.2 3.2 L10 10 L16.8 3.2" stroke="#9b9b9b" stroke-width="2.6" fill="none" stroke-linecap="round" stroke-linejoin="round"/></svg>
<svg class="ic" style="left:147.8px;top:662.4px" width="34" height="30" viewBox="0 0 34 30" ><defs><linearGradient id="fg1" x1="0" y1="0" x2="0" y2="1"><stop offset="0" stop-color="#fdeebd"/><stop offset="1" stop-color="#f2d084"/></linearGradient><linearGradient id="fg2" x1="0" y1="0" x2="1" y2="1"><stop offset="0" stop-color="#f9e9bb"/><stop offset="1" stop-color="#e3c288"/></linearGradient></defs><path d="M2.9 22 L2.9 7.2 L5.2 2.2 L14.6 2.2 L14.6 13 Z" fill="#f5d993" stroke="#c58a35" stroke-width="1.4" stroke-linejoin="round"/><path d="M6.2 3.6 H14 V5.4 H6.2 Z" fill="#fffdf4"/><path d="M4.2 7.6 H14 V12 L4.2 20 Z" fill="#fbeab8"/><path d="M3.4 6.9 H14" stroke="#d9a550" stroke-width="1"/><rect x="15" y="2" width="12.4" height="10" fill="url(#fg2)"/><path d="M14 2.3 H28.2 M12.6 8.7 H30.2 M14.9 1.4 V12 M21.2 -0.2 V12 M27.4 1.4 V12" stroke="#6d4435" stroke-width="1.8" fill="none"/><path d="M3.5 22.6 L13 12.4 L31.6 12.4 L23.4 22.6 Z" fill="url(#fg1)" stroke="#c58a35" stroke-width="1.5" stroke-linejoin="round"/><g transform="translate(0 0)"><rect x="0" y="11.6" width="14" height="15.8" fill="#d93c50"/><path d="M2.2 16 H6 L7 17.2 L8 16 H11.8 V17.8 H10.6 L8.8 19.7 L10.6 21.6 H11.8 V23.4 H8 L7 22.2 L6 23.4 H2.2 V21.6 H3.4 L5.2 19.7 L3.4 17.8 H2.2 Z" fill="#fff"/><rect x="6" y="18.6" width="2" height="2.2" fill="#f3b6be"/></g></svg>
<div class="tl" style="left:184.2px;top:657.5px">siat</div>
<svg class="ic" style="left:142px;top:697.7px" width="14" height="20" viewBox="0 0 14 20" ><path d="M3.2 3.2 L10 10 L3.2 16.8" stroke="#9b9b9b" stroke-width="2.6" fill="none" stroke-linecap="round" stroke-linejoin="round"/></svg>
<svg class="ic" style="left:173.8px;top:696.4px" width="34" height="30" viewBox="0 0 34 30" ><defs><linearGradient id="fg1" x1="0" y1="0" x2="0" y2="1"><stop offset="0" stop-color="#fdeebd"/><stop offset="1" stop-color="#f2d084"/></linearGradient><linearGradient id="fg2" x1="0" y1="0" x2="1" y2="1"><stop offset="0" stop-color="#f9e9bb"/><stop offset="1" stop-color="#e3c288"/></linearGradient></defs><path d="M2.9 22 L2.9 7.2 L5.2 2.2 L14.6 2.2 L14.6 13 Z" fill="#f5d993" stroke="#c58a35" stroke-width="1.4" stroke-linejoin="round"/><path d="M6.2 3.6 H14 V5.4 H6.2 Z" fill="#fffdf4"/><path d="M4.2 7.6 H14 V12 L4.2 20 Z" fill="#fbeab8"/><path d="M3.4 6.9 H14" stroke="#d9a550" stroke-width="1"/><rect x="15" y="2" width="12.4" height="10" fill="url(#fg2)"/><path d="M14 2.3 H28.2 M12.6 8.7 H30.2 M14.9 1.4 V12 M21.2 -0.2 V12 M27.4 1.4 V12" stroke="#6d4435" stroke-width="1.8" fill="none"/><path d="M3.5 22.6 L13 12.4 L31.6 12.4 L23.4 22.6 Z" fill="url(#fg1)" stroke="#c58a35" stroke-width="1.5" stroke-linejoin="round"/><g transform="translate(0 0)"><path d="M3.6 11.4 Q7 9.6 10.4 11.4 L13.6 23.6 V26.4 H0.4 V23.6 Z" fill="#f7e2a8" stroke="#dba048" stroke-width="1.3" stroke-linejoin="round"/><path d="M1 24.6 H13 V26 H1 Z" fill="#e3a750"/><path d="M4.6 12.6 Q7 11.4 9.4 12.6 L10.2 15.4 H3.8 Z" fill="#fdf4dc" opacity=".8"/><rect x="6.1" y="14.8" width="1.9" height="6" fill="#3d1c05"/><rect x="6.1" y="21.8" width="1.9" height="1.9" fill="#3d1c05"/></g></svg>
<div class="tl" style="left:210.2px;top:691.5px">api</div>
<svg class="ic" style="left:142px;top:731.7px" width="14" height="20" viewBox="0 0 14 20" ><path d="M3.2 3.2 L10 10 L3.2 16.8" stroke="#9b9b9b" stroke-width="2.6" fill="none" stroke-linecap="round" stroke-linejoin="round"/></svg>
<svg class="ic" style="left:173.8px;top:730.4px" width="34" height="30" viewBox="0 0 34 30" ><defs><linearGradient id="fg1" x1="0" y1="0" x2="0" y2="1"><stop offset="0" stop-color="#fdeebd"/><stop offset="1" stop-color="#f2d084"/></linearGradient><linearGradient id="fg2" x1="0" y1="0" x2="1" y2="1"><stop offset="0" stop-color="#f9e9bb"/><stop offset="1" stop-color="#e3c288"/></linearGradient></defs><path d="M2.9 22 L2.9 7.2 L5.2 2.2 L14.6 2.2 L14.6 13 Z" fill="#f5d993" stroke="#c58a35" stroke-width="1.4" stroke-linejoin="round"/><path d="M6.2 3.6 H14 V5.4 H6.2 Z" fill="#fffdf4"/><path d="M4.2 7.6 H14 V12 L4.2 20 Z" fill="#fbeab8"/><path d="M3.4 6.9 H14" stroke="#d9a550" stroke-width="1"/><rect x="15" y="2" width="12.4" height="10" fill="url(#fg2)"/><path d="M14 2.3 H28.2 M12.6 8.7 H30.2 M14.9 1.4 V12 M21.2 -0.2 V12 M27.4 1.4 V12" stroke="#6d4435" stroke-width="1.8" fill="none"/><path d="M3.5 22.6 L13 12.4 L31.6 12.4 L23.4 22.6 Z" fill="url(#fg1)" stroke="#c58a35" stroke-width="1.5" stroke-linejoin="round"/><g transform="translate(0 0)"><rect x="0" y="11.6" width="14" height="15.8" fill="#d93c50"/><path d="M2.2 16 H6 L7 17.2 L8 16 H11.8 V17.8 H10.6 L8.8 19.7 L10.6 21.6 H11.8 V23.4 H8 L7 22.2 L6 23.4 H2.2 V21.6 H3.4 L5.2 19.7 L3.4 17.8 H2.2 Z" fill="#fff"/><rect x="6" y="18.6" width="2" height="2.2" fill="#f3b6be"/></g></svg>
<div class="tl" style="left:210.2px;top:725.5px">Classes</div>
<svg class="ic" style="left:142px;top:765.7px" width="14" height="20" viewBox="0 0 14 20" ><path d="M3.2 3.2 L10 10 L3.2 16.8" stroke="#9b9b9b" stroke-width="2.6" fill="none" stroke-linecap="round" stroke-linejoin="round"/></svg>
<svg class="ic" style="left:173.8px;top:764.4px" width="34" height="30" viewBox="0 0 34 30" ><defs><linearGradient id="fg1" x1="0" y1="0" x2="0" y2="1"><stop offset="0" stop-color="#fdeebd"/><stop offset="1" stop-color="#f2d084"/></linearGradient><linearGradient id="fg2" x1="0" y1="0" x2="1" y2="1"><stop offset="0" stop-color="#f9e9bb"/><stop offset="1" stop-color="#e3c288"/></linearGradient></defs><path d="M2.9 22 L2.9 7.2 L5.2 2.2 L14.6 2.2 L14.6 13 Z" fill="#f5d993" stroke="#c58a35" stroke-width="1.4" stroke-linejoin="round"/><path d="M6.2 3.6 H14 V5.4 H6.2 Z" fill="#fffdf4"/><path d="M4.2 7.6 H14 V12 L4.2 20 Z" fill="#fbeab8"/><path d="M3.4 6.9 H14" stroke="#d9a550" stroke-width="1"/><rect x="15" y="2" width="12.4" height="10" fill="url(#fg2)"/><path d="M14 2.3 H28.2 M12.6 8.7 H30.2 M14.9 1.4 V12 M21.2 -0.2 V12 M27.4 1.4 V12" stroke="#6d4435" stroke-width="1.8" fill="none"/><path d="M3.5 22.6 L13 12.4 L31.6 12.4 L23.4 22.6 Z" fill="url(#fg1)" stroke="#c58a35" stroke-width="1.5" stroke-linejoin="round"/></svg>
<div class="tl" style="left:210.2px;top:759.5px">data</div>
<svg class="ic" style="left:142px;top:799.7px" width="14" height="20" viewBox="0 0 14 20" ><path d="M3.2 3.2 L10 10 L3.2 16.8" stroke="#9b9b9b" stroke-width="2.6" fill="none" stroke-linecap="round" stroke-linejoin="round"/></svg>
<svg class="ic" style="left:173.8px;top:798.4px" width="34" height="30" viewBox="0 0 34 30" ><defs><linearGradient id="fg1" x1="0" y1="0" x2="0" y2="1"><stop offset="0" stop-color="#fdeebd"/><stop offset="1" stop-color="#f2d084"/></linearGradient><linearGradient id="fg2" x1="0" y1="0" x2="1" y2="1"><stop offset="0" stop-color="#f9e9bb"/><stop offset="1" stop-color="#e3c288"/></linearGradient></defs><path d="M2.9 22 L2.9 7.2 L5.2 2.2 L14.6 2.2 L14.6 13 Z" fill="#f5d993" stroke="#c58a35" stroke-width="1.4" stroke-linejoin="round"/><path d="M6.2 3.6 H14 V5.4 H6.2 Z" fill="#fffdf4"/><path d="M4.2 7.6 H14 V12 L4.2 20 Z" fill="#fbeab8"/><path d="M3.4 6.9 H14" stroke="#d9a550" stroke-width="1"/><rect x="15" y="2" width="12.4" height="10" fill="url(#fg2)"/><path d="M14 2.3 H28.2 M12.6 8.7 H30.2 M14.9 1.4 V12 M21.2 -0.2 V12 M27.4 1.4 V12" stroke="#6d4435" stroke-width="1.8" fill="none"/><path d="M3.5 22.6 L13 12.4 L31.6 12.4 L23.4 22.6 Z" fill="url(#fg1)" stroke="#c58a35" stroke-width="1.5" stroke-linejoin="round"/><g transform="translate(0 0)"><path d="M3.6 11.4 Q7 9.6 10.4 11.4 L13.6 23.6 V26.4 H0.4 V23.6 Z" fill="#f7e2a8" stroke="#dba048" stroke-width="1.3" stroke-linejoin="round"/><path d="M1 24.6 H13 V26 H1 Z" fill="#e3a750"/><path d="M4.6 12.6 Q7 11.4 9.4 12.6 L10.2 15.4 H3.8 Z" fill="#fdf4dc" opacity=".8"/><rect x="6.1" y="14.8" width="1.9" height="6" fill="#3d1c05"/><rect x="6.1" y="21.8" width="1.9" height="1.9" fill="#3d1c05"/></g></svg>
<div class="tl" style="left:210.2px;top:793.5px">include</div>
<svg class="ic" style="left:142px;top:833.7px" width="14" height="20" viewBox="0 0 14 20" ><path d="M3.2 3.2 L10 10 L3.2 16.8" stroke="#9b9b9b" stroke-width="2.6" fill="none" stroke-linecap="round" stroke-linejoin="round"/></svg>
<svg class="ic" style="left:173.8px;top:832.4px" width="34" height="30" viewBox="0 0 34 30" ><defs><linearGradient id="fg1" x1="0" y1="0" x2="0" y2="1"><stop offset="0" stop-color="#fdeebd"/><stop offset="1" stop-color="#f2d084"/></linearGradient><linearGradient id="fg2" x1="0" y1="0" x2="1" y2="1"><stop offset="0" stop-color="#f9e9bb"/><stop offset="1" stop-color="#e3c288"/></linearGradient></defs><path d="M2.9 22 L2.9 7.2 L5.2 2.2 L14.6 2.2 L14.6 13 Z" fill="#f5d993" stroke="#c58a35" stroke-width="1.4" stroke-linejoin="round"/><path d="M6.2 3.6 H14 V5.4 H6.2 Z" fill="#fffdf4"/><path d="M4.2 7.6 H14 V12 L4.2 20 Z" fill="#fbeab8"/><path d="M3.4 6.9 H14" stroke="#d9a550" stroke-width="1"/><rect x="15" y="2" width="12.4" height="10" fill="url(#fg2)"/><path d="M14 2.3 H28.2 M12.6 8.7 H30.2 M14.9 1.4 V12 M21.2 -0.2 V12 M27.4 1.4 V12" stroke="#6d4435" stroke-width="1.8" fill="none"/><path d="M3.5 22.6 L13 12.4 L31.6 12.4 L23.4 22.6 Z" fill="url(#fg1)" stroke="#c58a35" stroke-width="1.5" stroke-linejoin="round"/></svg>
<div class="tl" style="left:210.2px;top:827.5px">js</div>
<svg class="ic" style="left:142px;top:867.7px" width="14" height="20" viewBox="0 0 14 20" ><path d="M3.2 3.2 L10 10 L3.2 16.8" stroke="#9b9b9b" stroke-width="2.6" fill="none" stroke-linecap="round" stroke-linejoin="round"/></svg>
<svg class="ic" style="left:173.8px;top:866.4px" width="34" height="30" viewBox="0 0 34 30" ><defs><linearGradient id="fg1" x1="0" y1="0" x2="0" y2="1"><stop offset="0" stop-color="#fdeebd"/><stop offset="1" stop-color="#f2d084"/></linearGradient><linearGradient id="fg2" x1="0" y1="0" x2="1" y2="1"><stop offset="0" stop-color="#f9e9bb"/><stop offset="1" stop-color="#e3c288"/></linearGradient></defs><path d="M2.9 22 L2.9 7.2 L5.2 2.2 L14.6 2.2 L14.6 13 Z" fill="#f5d993" stroke="#c58a35" stroke-width="1.4" stroke-linejoin="round"/><path d="M6.2 3.6 H14 V5.4 H6.2 Z" fill="#fffdf4"/><path d="M4.2 7.6 H14 V12 L4.2 20 Z" fill="#fbeab8"/><path d="M3.4 6.9 H14" stroke="#d9a550" stroke-width="1"/><rect x="15" y="2" width="12.4" height="10" fill="url(#fg2)"/><path d="M14 2.3 H28.2 M12.6 8.7 H30.2 M14.9 1.4 V12 M21.2 -0.2 V12 M27.4 1.4 V12" stroke="#6d4435" stroke-width="1.8" fill="none"/><path d="M3.5 22.6 L13 12.4 L31.6 12.4 L23.4 22.6 Z" fill="url(#fg1)" stroke="#c58a35" stroke-width="1.5" stroke-linejoin="round"/><g transform="translate(0 0)"><rect x="0" y="11.6" width="14" height="15.8" fill="#d93c50"/><path d="M2.2 16 H6 L7 17.2 L8 16 H11.8 V17.8 H10.6 L8.8 19.7 L10.6 21.6 H11.8 V23.4 H8 L7 22.2 L6 23.4 H2.2 V21.6 H3.4 L5.2 19.7 L3.4 17.8 H2.2 Z" fill="#fff"/><rect x="6" y="18.6" width="2" height="2.2" fill="#f3b6be"/></g></svg>
<div class="tl" style="left:210.2px;top:861.5px">Libs</div>
<svg class="ic" style="left:142px;top:901.7px" width="14" height="20" viewBox="0 0 14 20" ><path d="M3.2 3.2 L10 10 L3.2 16.8" stroke="#9b9b9b" stroke-width="2.6" fill="none" stroke-linecap="round" stroke-linejoin="round"/></svg>
<svg class="ic" style="left:173.8px;top:900.4px" width="34" height="30" viewBox="0 0 34 30" ><defs><linearGradient id="fg1" x1="0" y1="0" x2="0" y2="1"><stop offset="0" stop-color="#fdeebd"/><stop offset="1" stop-color="#f2d084"/></linearGradient><linearGradient id="fg2" x1="0" y1="0" x2="1" y2="1"><stop offset="0" stop-color="#f9e9bb"/><stop offset="1" stop-color="#e3c288"/></linearGradient></defs><path d="M2.9 22 L2.9 7.2 L5.2 2.2 L14.6 2.2 L14.6 13 Z" fill="#f5d993" stroke="#c58a35" stroke-width="1.4" stroke-linejoin="round"/><path d="M6.2 3.6 H14 V5.4 H6.2 Z" fill="#fffdf4"/><path d="M4.2 7.6 H14 V12 L4.2 20 Z" fill="#fbeab8"/><path d="M3.4 6.9 H14" stroke="#d9a550" stroke-width="1"/><rect x="15" y="2" width="12.4" height="10" fill="url(#fg2)"/><path d="M14 2.3 H28.2 M12.6 8.7 H30.2 M14.9 1.4 V12 M21.2 -0.2 V12 M27.4 1.4 V12" stroke="#6d4435" stroke-width="1.8" fill="none"/><path d="M3.5 22.6 L13 12.4 L31.6 12.4 L23.4 22.6 Z" fill="url(#fg1)" stroke="#c58a35" stroke-width="1.5" stroke-linejoin="round"/><g transform="translate(0 0)"><rect x="0" y="11.6" width="14" height="15.8" fill="#d93c50"/><path d="M2.2 16 H6 L7 17.2 L8 16 H11.8 V17.8 H10.6 L8.8 19.7 L10.6 21.6 H11.8 V23.4 H8 L7 22.2 L6 23.4 H2.2 V21.6 H3.4 L5.2 19.7 L3.4 17.8 H2.2 Z" fill="#fff"/><rect x="6" y="18.6" width="2" height="2.2" fill="#f3b6be"/></g></svg>
<div class="tl" style="left:210.2px;top:895.5px">LibSiat</div>
<svg class="ic" style="left:142px;top:935.7px" width="14" height="20" viewBox="0 0 14 20" ><path d="M3.2 3.2 L10 10 L3.2 16.8" stroke="#9b9b9b" stroke-width="2.6" fill="none" stroke-linecap="round" stroke-linejoin="round"/></svg>
<svg class="ic" style="left:173.8px;top:934.4px" width="34" height="30" viewBox="0 0 34 30" ><defs><linearGradient id="fg1" x1="0" y1="0" x2="0" y2="1"><stop offset="0" stop-color="#fdeebd"/><stop offset="1" stop-color="#f2d084"/></linearGradient><linearGradient id="fg2" x1="0" y1="0" x2="1" y2="1"><stop offset="0" stop-color="#f9e9bb"/><stop offset="1" stop-color="#e3c288"/></linearGradient></defs><path d="M2.9 22 L2.9 7.2 L5.2 2.2 L14.6 2.2 L14.6 13 Z" fill="#f5d993" stroke="#c58a35" stroke-width="1.4" stroke-linejoin="round"/><path d="M6.2 3.6 H14 V5.4 H6.2 Z" fill="#fffdf4"/><path d="M4.2 7.6 H14 V12 L4.2 20 Z" fill="#fbeab8"/><path d="M3.4 6.9 H14" stroke="#d9a550" stroke-width="1"/><rect x="15" y="2" width="12.4" height="10" fill="url(#fg2)"/><path d="M14 2.3 H28.2 M12.6 8.7 H30.2 M14.9 1.4 V12 M21.2 -0.2 V12 M27.4 1.4 V12" stroke="#6d4435" stroke-width="1.8" fill="none"/><path d="M3.5 22.6 L13 12.4 L31.6 12.4 L23.4 22.6 Z" fill="url(#fg1)" stroke="#c58a35" stroke-width="1.5" stroke-linejoin="round"/><g transform="translate(0 0)"><path d="M3.6 11.4 Q7 9.6 10.4 11.4 L13.6 23.6 V26.4 H0.4 V23.6 Z" fill="#f7e2a8" stroke="#dba048" stroke-width="1.3" stroke-linejoin="round"/><path d="M1 24.6 H13 V26 H1 Z" fill="#e3a750"/><path d="M4.6 12.6 Q7 11.4 9.4 12.6 L10.2 15.4 H3.8 Z" fill="#fdf4dc" opacity=".8"/><rect x="6.1" y="14.8" width="1.9" height="6" fill="#3d1c05"/><rect x="6.1" y="21.8" width="1.9" height="1.9" fill="#3d1c05"/></g></svg>
<div class="tl" style="left:210.2px;top:929.5px">pages</div>
<svg class="ic" style="left:142px;top:969.7px" width="14" height="20" viewBox="0 0 14 20" ><path d="M3.2 3.2 L10 10 L3.2 16.8" stroke="#9b9b9b" stroke-width="2.6" fill="none" stroke-linecap="round" stroke-linejoin="round"/></svg>
<svg class="ic" style="left:173.8px;top:968.4px" width="34" height="30" viewBox="0 0 34 30" ><defs><linearGradient id="fg1" x1="0" y1="0" x2="0" y2="1"><stop offset="0" stop-color="#fdeebd"/><stop offset="1" stop-color="#f2d084"/></linearGradient><linearGradient id="fg2" x1="0" y1="0" x2="1" y2="1"><stop offset="0" stop-color="#f9e9bb"/><stop offset="1" stop-color="#e3c288"/></linearGradient></defs><path d="M2.9 22 L2.9 7.2 L5.2 2.2 L14.6 2.2 L14.6 13 Z" fill="#f5d993" stroke="#c58a35" stroke-width="1.4" stroke-linejoin="round"/><path d="M6.2 3.6 H14 V5.4 H6.2 Z" fill="#fffdf4"/><path d="M4.2 7.6 H14 V12 L4.2 20 Z" fill="#fbeab8"/><path d="M3.4 6.9 H14" stroke="#d9a550" stroke-width="1"/><rect x="15" y="2" width="12.4" height="10" fill="url(#fg2)"/><path d="M14 2.3 H28.2 M12.6 8.7 H30.2 M14.9 1.4 V12 M21.2 -0.2 V12 M27.4 1.4 V12" stroke="#6d4435" stroke-width="1.8" fill="none"/><path d="M3.5 22.6 L13 12.4 L31.6 12.4 L23.4 22.6 Z" fill="url(#fg1)" stroke="#c58a35" stroke-width="1.5" stroke-linejoin="round"/><g transform="translate(0 0)"><path d="M3.6 11.4 Q7 9.6 10.4 11.4 L13.6 23.6 V26.4 H0.4 V23.6 Z" fill="#f7e2a8" stroke="#dba048" stroke-width="1.3" stroke-linejoin="round"/><path d="M1 24.6 H13 V26 H1 Z" fill="#e3a750"/><path d="M4.6 12.6 Q7 11.4 9.4 12.6 L10.2 15.4 H3.8 Z" fill="#fdf4dc" opacity=".8"/><rect x="6.1" y="14.8" width="1.9" height="6" fill="#3d1c05"/><rect x="6.1" y="21.8" width="1.9" height="1.9" fill="#3d1c05"/></g></svg>
<div class="tl" style="left:210.2px;top:963.5px">partials</div>
<svg class="ic" style="left:142px;top:1003.7px" width="14" height="20" viewBox="0 0 14 20" ><path d="M3.2 3.2 L10 10 L3.2 16.8" stroke="#9b9b9b" stroke-width="2.6" fill="none" stroke-linecap="round" stroke-linejoin="round"/></svg>
<svg class="ic" style="left:173.8px;top:1002.4px" width="34" height="30" viewBox="0 0 34 30" ><defs><linearGradient id="fg1" x1="0" y1="0" x2="0" y2="1"><stop offset="0" stop-color="#fdeebd"/><stop offset="1" stop-color="#f2d084"/></linearGradient><linearGradient id="fg2" x1="0" y1="0" x2="1" y2="1"><stop offset="0" stop-color="#f9e9bb"/><stop offset="1" stop-color="#e3c288"/></linearGradient></defs><path d="M2.9 22 L2.9 7.2 L5.2 2.2 L14.6 2.2 L14.6 13 Z" fill="#f5d993" stroke="#c58a35" stroke-width="1.4" stroke-linejoin="round"/><path d="M6.2 3.6 H14 V5.4 H6.2 Z" fill="#fffdf4"/><path d="M4.2 7.6 H14 V12 L4.2 20 Z" fill="#fbeab8"/><path d="M3.4 6.9 H14" stroke="#d9a550" stroke-width="1"/><rect x="15" y="2" width="12.4" height="10" fill="url(#fg2)"/><path d="M14 2.3 H28.2 M12.6 8.7 H30.2 M14.9 1.4 V12 M21.2 -0.2 V12 M27.4 1.4 V12" stroke="#6d4435" stroke-width="1.8" fill="none"/><path d="M3.5 22.6 L13 12.4 L31.6 12.4 L23.4 22.6 Z" fill="url(#fg1)" stroke="#c58a35" stroke-width="1.5" stroke-linejoin="round"/><g transform="translate(0 0)"><rect x="0" y="11.6" width="14" height="15.8" fill="#d93c50"/><path d="M2.2 16 H6 L7 17.2 L8 16 H11.8 V17.8 H10.6 L8.8 19.7 L10.6 21.6 H11.8 V23.4 H8 L7 22.2 L6 23.4 H2.2 V21.6 H3.4 L5.2 19.7 L3.4 17.8 H2.2 Z" fill="#fff"/><rect x="6" y="18.6" width="2" height="2.2" fill="#f3b6be"/></g></svg>
<div class="tl" style="left:210.2px;top:997.5px">Resources</div>
<svg class="ic" style="left:142px;top:1037.7px" width="14" height="20" viewBox="0 0 14 20" ><path d="M3.2 3.2 L10 10 L3.2 16.8" stroke="#9b9b9b" stroke-width="2.6" fill="none" stroke-linecap="round" stroke-linejoin="round"/></svg>
<svg class="ic" style="left:173.8px;top:1036.4px" width="34" height="30" viewBox="0 0 34 30" ><defs><linearGradient id="fg1" x1="0" y1="0" x2="0" y2="1"><stop offset="0" stop-color="#fdeebd"/><stop offset="1" stop-color="#f2d084"/></linearGradient><linearGradient id="fg2" x1="0" y1="0" x2="1" y2="1"><stop offset="0" stop-color="#f9e9bb"/><stop offset="1" stop-color="#e3c288"/></linearGradient></defs><path d="M2.9 22 L2.9 7.2 L5.2 2.2 L14.6 2.2 L14.6 13 Z" fill="#f5d993" stroke="#c58a35" stroke-width="1.4" stroke-linejoin="round"/><path d="M6.2 3.6 H14 V5.4 H6.2 Z" fill="#fffdf4"/><path d="M4.2 7.6 H14 V12 L4.2 20 Z" fill="#fbeab8"/><path d="M3.4 6.9 H14" stroke="#d9a550" stroke-width="1"/><rect x="15" y="2" width="12.4" height="10" fill="url(#fg2)"/><path d="M14 2.3 H28.2 M12.6 8.7 H30.2 M14.9 1.4 V12 M21.2 -0.2 V12 M27.4 1.4 V12" stroke="#6d4435" stroke-width="1.8" fill="none"/><path d="M3.5 22.6 L13 12.4 L31.6 12.4 L23.4 22.6 Z" fill="url(#fg1)" stroke="#c58a35" stroke-width="1.5" stroke-linejoin="round"/></svg>
<div class="tl" style="left:210.2px;top:1031.5px">sql</div>
<svg class="ic" style="left:173.8px;top:1070.4px" width="34" height="30" viewBox="0 0 34 30" ><defs><linearGradient id="fg1" x1="0" y1="0" x2="0" y2="1"><stop offset="0" stop-color="#fdeebd"/><stop offset="1" stop-color="#f2d084"/></linearGradient><linearGradient id="fg2" x1="0" y1="0" x2="1" y2="1"><stop offset="0" stop-color="#f9e9bb"/><stop offset="1" stop-color="#e3c288"/></linearGradient></defs><path d="M2.9 22 L2.9 7.2 L5.2 2.2 L14.6 2.2 L14.6 13 Z" fill="#f5d993" stroke="#c58a35" stroke-width="1.4" stroke-linejoin="round"/><path d="M6.2 3.6 H14 V5.4 H6.2 Z" fill="#fffdf4"/><path d="M4.2 7.6 H14 V12 L4.2 20 Z" fill="#fbeab8"/><path d="M3.4 6.9 H14" stroke="#d9a550" stroke-width="1"/><rect x="15" y="2" width="12.4" height="10" fill="url(#fg2)"/><path d="M14 2.3 H28.2 M12.6 8.7 H30.2 M14.9 1.4 V12 M21.2 -0.2 V12 M27.4 1.4 V12" stroke="#6d4435" stroke-width="1.8" fill="none"/><path d="M3.5 22.6 L13 12.4 L31.6 12.4 L23.4 22.6 Z" fill="url(#fg1)" stroke="#c58a35" stroke-width="1.5" stroke-linejoin="round"/></svg>
<div class="tl" style="left:210.2px;top:1065.5px">temp</div>
<svg class="ic" style="left:142px;top:1105.7px" width="14" height="20" viewBox="0 0 14 20" ><path d="M3.2 3.2 L10 10 L3.2 16.8" stroke="#9b9b9b" stroke-width="2.6" fill="none" stroke-linecap="round" stroke-linejoin="round"/></svg>
<svg class="ic" style="left:173.8px;top:1104.4px" width="34" height="30" viewBox="0 0 34 30" ><defs><linearGradient id="fg1" x1="0" y1="0" x2="0" y2="1"><stop offset="0" stop-color="#fdeebd"/><stop offset="1" stop-color="#f2d084"/></linearGradient><linearGradient id="fg2" x1="0" y1="0" x2="1" y2="1"><stop offset="0" stop-color="#f9e9bb"/><stop offset="1" stop-color="#e3c288"/></linearGradient></defs><path d="M2.9 22 L2.9 7.2 L5.2 2.2 L14.6 2.2 L14.6 13 Z" fill="#f5d993" stroke="#c58a35" stroke-width="1.4" stroke-linejoin="round"/><path d="M6.2 3.6 H14 V5.4 H6.2 Z" fill="#fffdf4"/><path d="M4.2 7.6 H14 V12 L4.2 20 Z" fill="#fbeab8"/><path d="M3.4 6.9 H14" stroke="#d9a550" stroke-width="1"/><rect x="15" y="2" width="12.4" height="10" fill="url(#fg2)"/><path d="M14 2.3 H28.2 M12.6 8.7 H30.2 M14.9 1.4 V12 M21.2 -0.2 V12 M27.4 1.4 V12" stroke="#6d4435" stroke-width="1.8" fill="none"/><path d="M3.5 22.6 L13 12.4 L31.6 12.4 L23.4 22.6 Z" fill="url(#fg1)" stroke="#c58a35" stroke-width="1.5" stroke-linejoin="round"/><g transform="translate(0 0)"><path d="M3.6 11.4 Q7 9.6 10.4 11.4 L13.6 23.6 V26.4 H0.4 V23.6 Z" fill="#f7e2a8" stroke="#dba048" stroke-width="1.3" stroke-linejoin="round"/><path d="M1 24.6 H13 V26 H1 Z" fill="#e3a750"/><path d="M4.6 12.6 Q7 11.4 9.4 12.6 L10.2 15.4 H3.8 Z" fill="#fdf4dc" opacity=".8"/><rect x="6.1" y="14.8" width="1.9" height="6" fill="#3d1c05"/><rect x="6.1" y="21.8" width="1.9" height="1.9" fill="#3d1c05"/></g></svg>
<div class="tl" style="left:210.2px;top:1099.5px">tpl</div>
<svg class="ic" style="left:173.8px;top:1136.3px" width="34" height="30" viewBox="0 0 34 30" ><defs><linearGradient id="pb1" x1="0" y1="0" x2="0" y2="1"><stop offset="0" stop-color="#cbbd8e"/><stop offset="1" stop-color="#8c9dc6"/></linearGradient><linearGradient id="pin" x1="0" y1="0" x2="0" y2="1"><stop offset="0" stop-color="#ffffff"/><stop offset="1" stop-color="#e3ebf9"/></linearGradient></defs><path d="M6 0 H22 L28 6 V28 H6 Z" fill="url(#pb1)"/><path d="M7.9 1.9 H20 V8 H26.1 V26.1 H7.9 Z" fill="url(#pin)"/><path d="M20 1.9 L26.1 8 H20 Z" fill="#e6c987"/><rect x="10" y="6" width="7.8" height="1.7" fill="#6580b3"/><rect x="10" y="10" width="13.8" height="1.7" fill="#6580b3"/><rect x="10" y="14" width="13.8" height="1.7" fill="#6580b3"/><rect x="10" y="18.1" width="13.8" height="1.7" fill="#6580b3"/><rect x="10" y="22.1" width="9.8" height="1.7" fill="#6580b3"/></svg>
<div class="tl" style="left:210.2px;top:1133.5px">.DS_Store</div>
<svg class="ic" style="left:142px;top:1173.7px" width="14" height="20" viewBox="0 0 14 20" ><path d="M3.2 3.2 L10 10 L3.2 16.8" stroke="#9b9b9b" stroke-width="2.6" fill="none" stroke-linecap="round" stroke-linejoin="round"/></svg>
<svg class="ic" style="left:173.8px;top:1170.3px" width="34" height="30" viewBox="0 0 34 30" ><defs><linearGradient id="pb2" x1="0" y1="0" x2="0" y2="1"><stop offset="0" stop-color="#c59c46"/><stop offset="1" stop-color="#8a815f"/></linearGradient><linearGradient id="pin" x1="0" y1="0" x2="0" y2="1"><stop offset="0" stop-color="#ffffff"/><stop offset="1" stop-color="#e3ebf9"/></linearGradient></defs><path d="M6 0 H22 L28 6 V28 H6 Z" fill="url(#pb2)"/><path d="M7.9 1.9 H20 V8 H26.1 V26.1 H7.9 Z" fill="url(#pin)"/><path d="M20 1.9 L26.1 8 H20 Z" fill="#e6c987"/><text x="10.6" y="21.6" font-family="Liberation Sans, sans-serif" font-weight="bold" font-size="17" fill="#28659a" stroke="#28659a" stroke-width=".5">P</text><g transform="translate(0 2.1)"><rect x="0" y="11.6" width="14" height="15.8" fill="#d93c50"/><path d="M2.2 16 H6 L7 17.2 L8 16 H11.8 V17.8 H10.6 L8.8 19.7 L10.6 21.6 H11.8 V23.4 H8 L7 22.2 L6 23.4 H2.2 V21.6 H3.4 L5.2 19.7 L3.4 17.8 H2.2 Z" fill="#fff"/><rect x="6" y="18.6" width="2" height="2.2" fill="#f3b6be"/></g></svg>
<div class="tl" style="left:210.2px;top:1167.5px">Hooks.php</div>
<svg class="ic" style="left:142px;top:1207.7px" width="14" height="20" viewBox="0 0 14 20" ><path d="M3.2 3.2 L10 10 L3.2 16.8" stroke="#9b9b9b" stroke-width="2.6" fill="none" stroke-linecap="round" stroke-linejoin="round"/></svg>
<svg class="ic" style="left:173.8px;top:1204.3px" width="34" height="30" viewBox="0 0 34 30" ><defs><linearGradient id="pb2" x1="0" y1="0" x2="0" y2="1"><stop offset="0" stop-color="#c59c46"/><stop offset="1" stop-color="#8a815f"/></linearGradient><linearGradient id="pin" x1="0" y1="0" x2="0" y2="1"><stop offset="0" stop-color="#ffffff"/><stop offset="1" stop-color="#e3ebf9"/></linearGradient></defs><path d="M6 0 H22 L28 6 V28 H6 Z" fill="url(#pb2)"/><path d="M7.9 1.9 H20 V8 H26.1 V26.1 H7.9 Z" fill="url(#pin)"/><path d="M20 1.9 L26.1 8 H20 Z" fill="#e6c987"/><text x="10.6" y="21.6" font-family="Liberation Sans, sans-serif" font-weight="bold" font-size="17" fill="#28659a" stroke="#28659a" stroke-width=".5">P</text><g transform="translate(0 2.1)"><path d="M3.6 11.4 Q7 9.6 10.4 11.4 L13.6 23.6 V26.4 H0.4 V23.6 Z" fill="#f7e2a8" stroke="#dba048" stroke-width="1.3" stroke-linejoin="round"/><path d="M1 24.6 H13 V26 H1 Z" fill="#e3a750"/><path d="M4.6 12.6 Q7 11.4 9.4 12.6 L10.2 15.4 H3.8 Z" fill="#fdf4dc" opacity=".8"/><rect x="6.1" y="14.8" width="1.9" height="6" fill="#3d1c05"/><rect x="6.1" y="21.8" width="1.9" height="1.9" fill="#3d1c05"/></g></svg>
<div class="tl" style="left:210.2px;top:1201.5px">init.php</div>
<svg class="ic" style="left:142px;top:1241.7px" width="14" height="20" viewBox="0 0 14 20" ><path d="M3.2 3.2 L10 10 L3.2 16.8" stroke="#9b9b9b" stroke-width="2.6" fill="none" stroke-linecap="round" stroke-linejoin="round"/></svg>
<svg class="ic" style="left:173.8px;top:1238.3px" width="34" height="30" viewBox="0 0 34 30" ><defs><linearGradient id="pb2" x1="0" y1="0" x2="0" y2="1"><stop offset="0" stop-color="#c59c46"/><stop offset="1" stop-color="#8a815f"/></linearGradient><linearGradient id="pin" x1="0" y1="0" x2="0" y2="1"><stop offset="0" stop-color="#ffffff"/><stop offset="1" stop-color="#e3ebf9"/></linearGradient></defs><path d="M6 0 H22 L28 6 V28 H6 Z" fill="url(#pb2)"/><path d="M7.9 1.9 H20 V8 H26.1 V26.1 H7.9 Z" fill="url(#pin)"/><path d="M20 1.9 L26.1 8 H20 Z" fill="#e6c987"/><text x="10.6" y="21.6" font-family="Liberation Sans, sans-serif" font-weight="bold" font-size="17" fill="#28659a" stroke="#28659a" stroke-width=".5">P</text><g transform="translate(0 2.1)"><path d="M3.6 11.4 Q7 9.6 10.4 11.4 L13.6 23.6 V26.4 H0.4 V23.6 Z" fill="#f7e2a8" stroke="#dba048" stroke-width="1.3" stroke-linejoin="round"/><path d="M1 24.6 H13 V26 H1 Z" fill="#e3a750"/><path d="M4.6 12.6 Q7 11.4 9.4 12.6 L10.2 15.4 H3.8 Z" fill="#fdf4dc" opacity=".8"/><rect x="6.1" y="14.8" width="1.9" height="6" fill="#3d1c05"/><rect x="6.1" y="21.8" width="1.9" height="1.9" fill="#3d1c05"/></g></svg>
<div class="tl" style="left:210.2px;top:1235.5px">SiatCallbacks.php</div>
<svg class="ic" style="left:142px;top:1275.7px" width="14" height="20" viewBox="0 0 14 20" ><path d="M3.2 3.2 L10 10 L3.2 16.8" stroke="#9b9b9b" stroke-width="2.6" fill="none" stroke-linecap="round" stroke-linejoin="round"/></svg>
<svg class="ic" style="left:173.8px;top:1272.3px" width="34" height="30" viewBox="0 0 34 30" ><defs><linearGradient id="pb2" x1="0" y1="0" x2="0" y2="1"><stop offset="0" stop-color="#c59c46"/><stop offset="1" stop-color="#8a815f"/></linearGradient><linearGradient id="pin" x1="0" y1="0" x2="0" y2="1"><stop offset="0" stop-color="#ffffff"/><stop offset="1" stop-color="#e3ebf9"/></linearGradient></defs><path d="M6 0 H22 L28 6 V28 H6 Z" fill="url(#pb2)"/><path d="M7.9 1.9 H20 V8 H26.1 V26.1 H7.9 Z" fill="url(#pin)"/><path d="M20 1.9 L26.1 8 H20 Z" fill="#e6c987"/><text x="10.6" y="21.6" font-family="Liberation Sans, sans-serif" font-weight="bold" font-size="17" fill="#28659a" stroke="#28659a" stroke-width=".5">P</text><g transform="translate(0 2.1)"><path d="M3.6 11.4 Q7 9.6 10.4 11.4 L13.6 23.6 V26.4 H0.4 V23.6 Z" fill="#f7e2a8" stroke="#dba048" stroke-width="1.3" stroke-linejoin="round"/><path d="M1 24.6 H13 V26 H1 Z" fill="#e3a750"/><path d="M4.6 12.6 Q7 11.4 9.4 12.6 L10.2 15.4 H3.8 Z" fill="#fdf4dc" opacity=".8"/><rect x="6.1" y="14.8" width="1.9" height="6" fill="#3d1c05"/><rect x="6.1" y="21.8" width="1.9" height="1.9" fill="#3d1c05"/></g></svg>
<div class="tl" style="left:210.2px;top:1269.5px">SiatDbConfig.php</div>
<svg class="ic" style="left:147.8px;top:1306.3px" width="34" height="30" viewBox="0 0 34 30" ><defs><linearGradient id="pb1" x1="0" y1="0" x2="0" y2="1"><stop offset="0" stop-color="#cbbd8e"/><stop offset="1" stop-color="#8c9dc6"/></linearGradient><linearGradient id="pin" x1="0" y1="0" x2="0" y2="1"><stop offset="0" stop-color="#ffffff"/><stop offset="1" stop-color="#e3ebf9"/></linearGradient></defs><path d="M6 0 H22 L28 6 V28 H6 Z" fill="url(#pb1)"/><path d="M7.9 1.9 H20 V8 H26.1 V26.1 H7.9 Z" fill="url(#pin)"/><path d="M20 1.9 L26.1 8 H20 Z" fill="#e6c987"/><rect x="10" y="6" width="7.8" height="1.7" fill="#6580b3"/><rect x="10" y="10" width="13.8" height="1.7" fill="#6580b3"/><rect x="10" y="14" width="13.8" height="1.7" fill="#6580b3"/><rect x="10" y="18.1" width="13.8" height="1.7" fill="#6580b3"/><rect x="10" y="22.1" width="9.8" height="1.7" fill="#6580b3"/></svg>
<div class="tl" style="left:184.2px;top:1303.5px">.DS_Store</div>
<svg class="ic" style="left:147.8px;top:1340.3px" width="34" height="30" viewBox="0 0 34 30" ><defs><linearGradient id="pb2" x1="0" y1="0" x2="0" y2="1"><stop offset="0" stop-color="#c59c46"/><stop offset="1" stop-color="#8a815f"/></linearGradient><linearGradient id="pin" x1="0" y1="0" x2="0" y2="1"><stop offset="0" stop-color="#ffffff"/><stop offset="1" stop-color="#e3ebf9"/></linearGradient></defs><path d="M6 0 H22 L28 6 V28 H6 Z" fill="url(#pb2)"/><path d="M7.9 1.9 H20 V8 H26.1 V26.1 H7.9 Z" fill="url(#pin)"/><path d="M20 1.9 L26.1 8 H20 Z" fill="#e6c987"/><defs><linearGradient id="hg" x1="0" y1="0" x2="1" y2="0"><stop offset="0" stop-color="#a8d26e"/><stop offset="1" stop-color="#0d7a2f"/></linearGradient></defs><rect x="10" y="8" width="7.8" height="1.8" fill="#e5404b"/><rect x="10" y="12" width="7.8" height="1.8" fill="#7390b8"/><rect x="20" y="12" width="1.8" height="1.8" fill="#2a5590"/><rect x="10" y="16.1" width="3.8" height="1.8" fill="#f0525a"/><rect x="16" y="16.1" width="5.8" height="1.8" fill="#21407f"/><rect x="10" y="20.1" width="11.8" height="1.8" fill="url(#hg)"/></svg>
<div class="tl" style="left:184.2px;top:1337.5px">index.html</div>
<svg class="ic" style="left:85px;top:1381.9px" width="20" height="14" viewBox="0 0 20 14" ><path d="M3.2 3.2 L10 10 L16.8 3.2" stroke="#9b9b9b" stroke-width="2.6" fill="none" stroke-linecap="round" stroke-linejoin="round"/></svg>
<svg class="ic" style="left:121.8px;top:1376.4px" width="34" height="30" viewBox="0 0 34 30" ><defs><linearGradient id="fg1" x1="0" y1="0" x2="0" y2="1"><stop offset="0" stop-color="#fdeebd"/><stop offset="1" stop-color="#f2d084"/></linearGradient><linearGradient id="fg2" x1="0" y1="0" x2="1" y2="1"><stop offset="0" stop-color="#f9e9bb"/><stop offset="1" stop-color="#e3c288"/></linearGradient></defs><path d="M2.9 22 L2.9 7.2 L5.2 2.2 L14.6 2.2 L14.6 13 Z" fill="#f5d993" stroke="#c58a35" stroke-width="1.4" stroke-linejoin="round"/><path d="M6.2 3.6 H14 V5.4 H6.2 Z" fill="#fffdf4"/><path d="M4.2 7.6 H14 V12 L4.2 20 Z" fill="#fbeab8"/><path d="M3.4 6.9 H14" stroke="#d9a550" stroke-width="1"/><rect x="15" y="2" width="12.4" height="10" fill="url(#fg2)"/><path d="M14 2.3 H28.2 M12.6 8.7 H30.2 M14.9 1.4 V12 M21.2 -0.2 V12 M27.4 1.4 V12" stroke="#6d4435" stroke-width="1.8" fill="none"/><path d="M3.5 22.6 L13 12.4 L31.6 12.4 L23.4 22.6 Z" fill="url(#fg1)" stroke="#c58a35" stroke-width="1.5" stroke-linejoin="round"/><g transform="translate(0 0)"><path d="M3.6 11.4 Q7 9.6 10.4 11.4 L13.6 23.6 V26.4 H0.4 V23.6 Z" fill="#f7e2a8" stroke="#dba048" stroke-width="1.3" stroke-linejoin="round"/><path d="M1 24.6 H13 V26 H1 Z" fill="#e3a750"/><path d="M4.6 12.6 Q7 11.4 9.4 12.6 L10.2 15.4 H3.8 Z" fill="#fdf4dc" opacity=".8"/><rect x="6.1" y="14.8" width="1.9" height="6" fill="#3d1c05"/><rect x="6.1" y="21.8" width="1.9" height="1.9" fill="#3d1c05"/></g></svg>
<div class="tl" style="left:158.2px;top:1371.5px">views</div>
<svg class="ic" style="left:116px;top:1411.7px" width="14" height="20" viewBox="0 0 14 20" ><path d="M3.2 3.2 L10 10 L3.2 16.8" stroke="#9b9b9b" stroke-width="2.6" fill="none" stroke-linecap="round" stroke-linejoin="round"/></svg>
<svg class="ic" style="left:147.8px;top:1410.4px" width="34" height="30" viewBox="0 0 34 30" ><defs><linearGradient id="fg1" x1="0" y1="0" x2="0" y2="1"><stop offset="0" stop-color="#fdeebd"/><stop offset="1" stop-color="#f2d084"/></linearGradient><linearGradient id="fg2" x1="0" y1="0" x2="1" y2="1"><stop offset="0" stop-color="#f9e9bb"/><stop offset="1" stop-color="#e3c288"/></linearGradient></defs><path d="M2.9 22 L2.9 7.2 L5.2 2.2 L14.6 2.2 L14.6 13 Z" fill="#f5d993" stroke="#c58a35" stroke-width="1.4" stroke-linejoin="round"/><path d="M6.2 3.6 H14 V5.4 H6.2 Z" fill="#fffdf4"/><path d="M4.2 7.6 H14 V12 L4.2 20 Z" fill="#fbeab8"/><path d="M3.4 6.9 H14" stroke="#d9a550" stroke-width="1"/><rect x="15" y="2" width="12.4" height="10" fill="url(#fg2)"/><path d="M14 2.3 H28.2 M12.6 8.7 H30.2 M14.9 1.4 V12 M21.2 -0.2 V12 M27.4 1.4 V12" stroke="#6d4435" stroke-width="1.8" fill="none"/><path d="M3.5 22.6 L13 12.4 L31.6 12.4 L23.4 22.6 Z" fill="url(#fg1)" stroke="#c58a35" stroke-width="1.5" stroke-linejoin="round"/><g transform="translate(0 0)"><path d="M3.6 11.4 Q7 9.6 10.4 11.4 L13.6 23.6 V26.4 H0.4 V23.6 Z" fill="#f7e2a8" stroke="#dba048" stroke-width="1.3" stroke-linejoin="round"/><path d="M1 24.6 H13 V26 H1 Z" fill="#e3a750"/><path d="M4.6 12.6 Q7 11.4 9.4 12.6 L10.2 15.4 H3.8 Z" fill="#fdf4dc" opacity=".8"/><rect x="6.1" y="14.8" width="1.9" height="6" fill="#3d1c05"/><rect x="6.1" y="21.8" width="1.9" height="1.9" fill="#3d1c05"/></g></svg>
<div class="tl" style="left:184.2px;top:1405.5px">errors</div>
<svg class="ic" style="left:116px;top:1445.7px" width="14" height="20" viewBox="0 0 14 20" ><path d="M3.2 3.2 L10 10 L3.2 16.8" stroke="#9b9b9b" stroke-width="2.6" fill="none" stroke-linecap="round" stroke-linejoin="round"/></svg>
<svg class="ic" style="left:147.8px;top:1444.4px" width="34" height="30" viewBox="0 0 34 30" ><defs><linearGradient id="fg1" x1="0" y1="0" x2="0" y2="1"><stop offset="0" stop-color="#fdeebd"/><stop offset="1" stop-color="#f2d084"/></linearGradient><linearGradient id="fg2" x1="0" y1="0" x2="1" y2="1"><stop offset="0" stop-color="#f9e9bb"/><stop offset="1" stop-color="#e3c288"/></linearGradient></defs><path d="M2.9 22 L2.9 7.2 L5.2 2.2 L14.6 2.2 L14.6 13 Z" fill="#f5d993" stroke="#c58a35" stroke-width="1.4" stroke-linejoin="round"/><path d="M6.2 3.6 H14 V5.4 H6.2 Z" fill="#fffdf4"/><path d="M4.2 7.6 H14 V12 L4.2 20 Z" fill="#fbeab8"/><path d="M3.4 6.9 H14" stroke="#d9a550" stroke-width="1"/><rect x="15" y="2" width="12.4" height="10" fill="url(#fg2)"/><path d="M14 2.3 H28.2 M12.6 8.7 H30.2 M14.9 1.4 V12 M21.2 -0.2 V12 M27.4 1.4 V12" stroke="#6d4435" stroke-width="1.8" fill="none"/><path d="M3.5 22.6 L13 12.4 L31.6 12.4 L23.4 22.6 Z" fill="url(#fg1)" stroke="#c58a35" stroke-width="1.5" stroke-linejoin="round"/><g transform="translate(0 0)"><path d="M3.6 11.4 Q7 9.6 10.4 11.4 L13.6 23.6 V26.4 H0.4 V23.6 Z" fill="#f7e2a8" stroke="#dba048" stroke-width="1.3" stroke-linejoin="round"/><path d="M1 24.6 H13 V26 H1 Z" fill="#e3a750"/><path d="M4.6 12.6 Q7 11.4 9.4 12.6 L10.2 15.4 H3.8 Z" fill="#fdf4dc" opacity=".8"/><rect x="6.1" y="14.8" width="1.9" height="6" fill="#3d1c05"/><rect x="6.1" y="21.8" width="1.9" height="1.9" fill="#3d1c05"/></g></svg>
<div class="tl" style="left:184.2px;top:1439.5px">siat</div>
</div></div>
<div id="ed"><div id="edtab"></div><div id="code">
<div class="cl" style="top:28.0px"><span style="color:#d9e8f7">\Siat\Invoices\SiatInvoice;</span></div>
<div class="cl" style="top:448.0px"><span style="color:#66e1f8">ner<span class="u">_</span>id</span><span style="color:#d9e8f7">;</span></div>
<div class="cl" style="top:476.0px"><span style="color:#66e1f8">unt</span><span style="color:#d9e8f7">;</span></div>
<div class="cl" style="top:504.0px"><span style="color:#66e1f8">o<span class="u">_</span>documento<span class="u">_</span>sector</span><span style="color:#d9e8f7">; </span><span style="color:#626262">//compra venta</span></div>
<div class="cl" style="top:532.0px"><span style="color:#66e1f8">uc<span class="u">_</span>nif</span><span style="color:#d9e8f7">;</span></div>
<div class="cl" style="top:560.0px"><span style="color:#a7ec21;font-style:italic">t<span class="u">_</span>invoice<span class="u">_</span>num</span><span style="color:#d9e8f7">();</span></div>
<div class="cl" style="top:588.0px"><span style="color:#66e1f8"><span class="u">_</span>venta</span><span style="color:#d9e8f7">;</span></div>
<div class="cl" style="top:616.0px"><span style="color:#66e1f8">ner</span><span style="color:#d9e8f7">;</span></div>
<div class="cl" style="top:644.0px"><span style="color:#66e1f8">o<span class="u">_</span>sucursal</span><span style="color:#d9e8f7">;</span></div>
<div class="cl" style="top:672.0px"><span style="color:#66e1f8">o<span class="u">_</span>metodo<span class="u">_</span>pago</span><span style="color:#d9e8f7">;</span></div>
<div class="cl" style="top:700.0px"><span style="color:#66e1f8">o<span class="u">_</span>moneda</span><span style="color:#d9e8f7">;</span></div>
<div class="cl" style="top:728.0px"><span style="color:#66e1f8">cambio</span><span style="color:#d9e8f7">;</span></div>
<div class="cl" style="top:756.0px"><span style="color:#1290c3">e</span><span style="color:#d9e8f7">::</span><span style="color:#2dbb4e;font-style:italic">callback</span><span style="color:#d9e8f7">(</span><span style="color:#17c6a3;font-style:italic">'getUser'</span><span style="color:#d9e8f7">) ?: </span><span style="color:#17c6a3;font-style:italic">'vendedor1'</span><span style="color:#d9e8f7">;</span></div>
<div class="cl" style="top:784.0px"><span style="color:#66e1f8"><span class="u">_</span>giftcard</span><span style="color:#d9e8f7">;</span></div>
<div class="cl" style="top:896.0px"><span style="color:#626262">entCategoryById($catId);</span></div>
<div class="cl" style="top:952.0px"><span style="color:#66e1f8">uantity</span><span style="color:#d9e8f7">;</span></div>
<div class="cl" style="top:980.0px"><span style="color:#66e1f8">roduct<span class="u">_</span>code</span><span style="color:#d9e8f7">;</span></div>
<div class="cl" style="top:1008.0px"><span style="color:#66e1f8">roduct<span class="u">_</span>name</span><span style="color:#d9e8f7">;</span></div>
<div class="cl" style="top:1036.0px"><span style="color:#66e1f8">rice</span><span style="color:#d9e8f7">;</span></div>
<div class="cl" style="top:1064.0px"><span style="color:#66e1f8">odigo<span class="u">_</span>actividad</span><span style="color:#d9e8f7">;</span></div>
<div class="cl" style="top:1092.0px"><span style="color:#66e1f8">odigo<span class="u">_</span>producto<span class="u">_</span>sin</span><span style="color:#d9e8f7">;</span></div>
<div class="cl" style="top:1120.0px"><span style="color:#f5b83d">m</span><span style="color:#d9e8f7">-&gt;</span><span style="color:#66e1f8">unidad<span class="u">_</span>medida</span><span style="color:#d9e8f7">;</span></div>
<div class="cl" style="top:1288.0px"><span style="color:#a7ec21;font-style:italic">fig</span><span style="color:#d9e8f7">();</span></div>
<div class="cl" style="top:1316.0px"><span style="color:#2dbb4e">FacturaSiat</span><span style="color:#d9e8f7">(</span><span style="color:#f5b83d">$config</span><span style="color:#d9e8f7">);</span></div>
</div>
<div style="position:absolute;left:1578px;top:66px;width:18px;height:10px;box-sizing:border-box;border:2px solid #c9a32c;background:#6b5a1e"></div>
</div>
<div style="position:absolute;left:1162px;top:100px;width:233px;height:50px;background:#2a2a2a"></div>
<svg class="ic" style="left:918.8px;top:111.8px" width="34" height="30" viewBox="0 0 34 30" ><defs><linearGradient id="pb1" x1="0" y1="0" x2="0" y2="1"><stop offset="0" stop-color="#cbbd8e"/><stop offset="1" stop-color="#8c9dc6"/></linearGradient><linearGradient id="pin" x1="0" y1="0" x2="0" y2="1"><stop offset="0" stop-color="#ffffff"/><stop offset="1" stop-color="#e3ebf9"/></linearGradient></defs><path d="M6 0 H22 L28 6 V28 H6 Z" fill="url(#pb1)"/><path d="M7.9 1.9 H20 V8 H26.1 V26.1 H7.9 Z" fill="url(#pin)"/><path d="M20 1.9 L26.1 8 H20 Z" fill="#e6c987"/><text x="8.8" y="25" font-family="Liberation Sans, sans-serif" font-size="15" fill="#f59a23" stroke="#f59a23" stroke-width=".4" textLength="16.4" lengthAdjust="spacingAndGlyphs">JS</text></svg>
<div class="tt" style="left:962.1px;top:110.5px">service-invo...</div>
<svg class="ic" style="left:1170px;top:111.8px" width="34" height="30" viewBox="0 0 34 30" ><defs><linearGradient id="pb2" x1="0" y1="0" x2="0" y2="1"><stop offset="0" stop-color="#c59c46"/><stop offset="1" stop-color="#8a815f"/></linearGradient><linearGradient id="pin" x1="0" y1="0" x2="0" y2="1"><stop offset="0" stop-color="#ffffff"/><stop offset="1" stop-color="#e3ebf9"/></linearGradient></defs><path d="M6 0 H22 L28 6 V28 H6 Z" fill="url(#pb2)"/><path d="M7.9 1.9 H20 V8 H26.1 V26.1 H7.9 Z" fill="url(#pin)"/><path d="M20 1.9 L26.1 8 H20 Z" fill="#e6c987"/><rect x="11.4" y="8.4" width="9" height="9" fill="#8fb3dd" opacity=".45"/><text x="12.6" y="16.6" font-family="Liberation Sans, sans-serif" font-weight="bold" font-size="11" fill="#2e6da4">P</text><g transform="translate(0 2.1)"><path d="M3.6 11.4 Q7 9.6 10.4 11.4 L13.6 23.6 V26.4 H0.4 V23.6 Z" fill="#f7e2a8" stroke="#dba048" stroke-width="1.3" stroke-linejoin="round"/><path d="M1 24.6 H13 V26 H1 Z" fill="#e3a750"/><path d="M4.6 12.6 Q7 11.4 9.4 12.6 L10.2 15.4 H3.8 Z" fill="#fdf4dc" opacity=".8"/><rect x="6.1" y="14.8" width="1.9" height="6" fill="#3d1c05"/><rect x="6.1" y="21.8" width="1.9" height="1.9" fill="#3d1c05"/></g></svg>
<div class="tt act" style="left:1210.3px;top:110.5px">TraitSiatIn...</div>
<svg class="ic" style="left:1403.5px;top:111.8px" width="34" height="30" viewBox="0 0 34 30" ><defs><linearGradient id="pb2" x1="0" y1="0" x2="0" y2="1"><stop offset="0" stop-color="#c59c46"/><stop offset="1" stop-color="#8a815f"/></linearGradient><linearGradient id="pin" x1="0" y1="0" x2="0" y2="1"><stop offset="0" stop-color="#ffffff"/><stop offset="1" stop-color="#e3ebf9"/></linearGradient></defs><path d="M6 0 H22 L28 6 V28 H6 Z" fill="url(#pb2)"/><path d="M7.9 1.9 H20 V8 H26.1 V26.1 H7.9 Z" fill="url(#pin)"/><path d="M20 1.9 L26.1 8 H20 Z" fill="#e6c987"/><rect x="11.4" y="8.4" width="9" height="9" fill="#8fb3dd" opacity=".45"/><text x="12.6" y="16.6" font-family="Liberation Sans, sans-serif" font-weight="bold" font-size="11" fill="#2e6da4">P</text><g transform="translate(0 2.1)"><path d="M3.6 11.4 Q7 9.6 10.4 11.4 L13.6 23.6 V26.4 H0.4 V23.6 Z" fill="#f7e2a8" stroke="#dba048" stroke-width="1.3" stroke-linejoin="round"/><path d="M1 24.6 H13 V26 H1 Z" fill="#e3a750"/><path d="M4.6 12.6 Q7 11.4 9.4 12.6 L10.2 15.4 H3.8 Z" fill="#fdf4dc" opacity=".8"/><rect x="6.1" y="14.8" width="1.9" height="6" fill="#3d1c05"/><rect x="6.1" y="21.8" width="1.9" height="1.9" fill="#3d1c05"/></g></svg>
<div class="tt" style="left:1444.4px;top:110.5px">SiatCallback...</div>
<svg class="ic" style="left:1653px;top:111.8px" width="34" height="30" viewBox="0 0 34 30" ><defs><linearGradient id="pb2" x1="0" y1="0" x2="0" y2="1"><stop offset="0" stop-color="#c59c46"/><stop offset="1" stop-color="#8a815f"/></linearGradient><linearGradient id="pin" x1="0" y1="0" x2="0" y2="1"><stop offset="0" stop-color="#ffffff"/><stop offset="1" stop-color="#e3ebf9"/></linearGradient></defs><path d="M6 0 H22 L28 6 V28 H6 Z" fill="url(#pb2)"/><path d="M7.9 1.9 H20 V8 H26.1 V26.1 H7.9 Z" fill="url(#pin)"/><path d="M20 1.9 L26.1 8 H20 Z" fill="#e6c987"/><rect x="11.4" y="8.4" width="9" height="9" fill="#8fb3dd" opacity=".45"/><text x="12.6" y="16.6" font-family="Liberation Sans, sans-serif" font-weight="bold" font-size="11" fill="#2e6da4">P</text><g transform="translate(0 2.1)"><path d="M3.6 11.4 Q7 9.6 10.4 11.4 L13.6 23.6 V26.4 H0.4 V23.6 Z" fill="#f7e2a8" stroke="#dba048" stroke-width="1.3" stroke-linejoin="round"/><path d="M1 24.6 H13 V26 H1 Z" fill="#e3a750"/><path d="M4.6 12.6 Q7 11.4 9.4 12.6 L10.2 15.4 H3.8 Z" fill="#fdf4dc" opacity=".8"/><rect x="6.1" y="14.8" width="1.9" height="6" fill="#3d1c05"/><rect x="6.1" y="21.8" width="1.9" height="1.9" fill="#3d1c05"/></g></svg>
<div class="tt" style="left:1694.1px;top:110.5px">kyto_soft.php</div>
<svg class="ic" style="left:1893.5px;top:111.8px" width="34" height="30" viewBox="0 0 34 30" ><defs><linearGradient id="pb1" x1="0" y1="0" x2="0" y2="1"><stop offset="0" stop-color="#cbbd8e"/><stop offset="1" stop-color="#8c9dc6"/></linearGradient><linearGradient id="pin" x1="0" y1="0" x2="0" y2="1"><stop offset="0" stop-color="#ffffff"/><stop offset="1" stop-color="#e3ebf9"/></linearGradient></defs><path d="M6 0 H22 L28 6 V28 H6 Z" fill="url(#pb1)"/><path d="M7.9 1.9 H20 V8 H26.1 V26.1 H7.9 Z" fill="url(#pin)"/><path d="M20 1.9 L26.1 8 H20 Z" fill="#e6c987"/><text x="8.8" y="25" font-family="Liberation Sans, sans-serif" font-size="15" fill="#f59a23" stroke="#f59a23" stroke-width=".4" textLength="16.4" lengthAdjust="spacingAndGlyphs">JS</text></svg>
<div class="tt" style="left:1938.0px;top:110.5px">invoice-list...</div>
<svg class="ic" style="left:1361.5px;top:118px" width="18" height="18" viewBox="0 0 18 18" ><path d="M1 1 L17 17 M17 1 L1 17" stroke="#e8e8e8" stroke-width="2" stroke-linecap="round"/></svg>
<div class="tt" style="left:2138.5px;top:99px;font-size:27px;font-weight:bold;color:#c2c2c2;letter-spacing:-1px">»</div>
<div class="tt" style="left:2153.5px;top:115.4px;font-size:21px;color:#c6c6c6;letter-spacing:0">7</div>
<svg class="ic" style="left:2414px;top:114px" width="20" height="9" viewBox="0 0 20 9" ><rect x="1" y="1" width="18" height="6" fill="none" stroke="#d0d0d0" stroke-width="1.8"/></svg>
<svg class="ic" style="left:2458px;top:114px" width="20" height="21" viewBox="0 0 20 21" ><rect x="1" y="1" width="18" height="18.6" fill="none" stroke="#d0d0d0" stroke-width="1.8"/><path d="M1 5 H19" stroke="#d0d0d0" stroke-width="1.8"/></svg>
<svg class="ic" style="left:2496px;top:100px" width="24" height="8" viewBox="0 0 24 8" ><rect x="10" y="2" width="4" height="4" fill="#c9c0b0"/><rect x="18" y="2" width="4" height="4" fill="#c9c0b0"/></svg>
<svg class="ic" style="left:2510px;top:121px" width="10" height="18" viewBox="0 0 10 18" ><path d="M10 9 H2 V16 H10 M10 2 H6 V9" fill="none" stroke="#7a6a60" stroke-width="2"/></svg>
<svg class="ic" style="left:2506px;top:160px" width="14" height="30" viewBox="0 0 14 30" ><rect x="1" y="1" width="9.6" height="9.6" fill="#cfe4fb" stroke="#1f6fc4" stroke-width="2"/><rect x="1" y="19" width="9.6" height="9.6" fill="#cfe4fb" stroke="#1f6fc4" stroke-width="2"/></svg>
<svg class="ic" style="left:2496px;top:198px" width="24" height="8" viewBox="0 0 24 8" ><rect x="10" y="2" width="4" height="4" fill="#c9c0b0"/><rect x="18" y="2" width="4" height="4" fill="#c9c0b0"/></svg>
<svg class="ic" style="left:2510px;top:219px" width="10" height="18" viewBox="0 0 10 18" ><path d="M10 9 H2 V16 H10 M10 2 H6 V9" fill="none" stroke="#7a6a60" stroke-width="2"/></svg>
<svg class="ic" style="left:2504px;top:256px" width="16" height="30" viewBox="0 0 16 30" ><rect x="0.8" y="0.8" width="20" height="28" fill="#f4f6fb" stroke="#9aa0c0" stroke-width="1.6"/><path d="M1 15 H16" stroke="#9aa0c0" stroke-width="1.4"/><circle cx="11" cy="8.6" r="5" fill="#d8232f"/><path d="M11 18 L17 24 V28 H5 V24 Z" fill="#f7a93b"/></svg>
<svg class="ic" style="left:2503px;top:296px" width="17" height="34" viewBox="0 0 17 34" ><rect x="7" y="4" width="14" height="28" rx="2" fill="#e9d3b4" stroke="#b89572" stroke-width="1.6"/><rect x="10" y="10" width="10" height="18" fill="#f6f8fc"/><path d="M1.5 20 L6.5 26.5 L16 11" fill="none" stroke="#1f6fd0" stroke-width="3"/></svg>
<svg class="ic" style="left:2506px;top:346px" width="14" height="24" viewBox="0 0 14 24" ><path d="M6 0 V24" stroke="#5a4d7a" stroke-width="1.6"/><rect x="2" y="11" width="9" height="6" fill="#b7c748" stroke="#3f7a4a" stroke-width="1"/><rect x="9" y="4" width="5" height="5" fill="#e2b23c"/></svg>
<svg class="ic" style="left:2507px;top:396px" width="13" height="14" viewBox="0 0 13 14" ><rect x="0.8" y="0.8" width="14" height="12" fill="#8fd08a" stroke="#6f9fb0" stroke-width="1.6"/><path d="M2 6 H13" stroke="#e6f6e4" stroke-width="2"/></svg>
<svg class="ic" style="left:2504px;top:431px" width="16" height="10" viewBox="0 0 16 10" ><path d="M0 5 H8 M5 1.5 L9 5 L5 8.5" stroke="#7f8497" stroke-width="1.4" fill="none"/><circle cx="14.6" cy="5" r="4" fill="#2f9a46" stroke="#17682a" stroke-width="1"/></svg>
<svg class="ic" style="left:2504px;top:451px" width="16" height="10" viewBox="0 0 16 10" ><path d="M0 5 H8 M5 1.5 L9 5 L5 8.5" stroke="#7f8497" stroke-width="1.4" fill="none"/><circle cx="14.6" cy="5" r="4" fill="#2f9a46" stroke="#17682a" stroke-width="1"/></svg>
<svg class="ic" style="left:2503px;top:484px" width="17" height="26" viewBox="0 0 17 26" ><path d="M0 25 L2 14 L17 1 V14 L8 25 Z" fill="#f4c36a" stroke="#c48a32" stroke-width="1"/><path d="M0 25 L1.6 16 L8 25 Z" fill="#fffdf2"/><path d="M6 11 L17 4 V10 L9 16 Z" fill="#b5b1ba"/></svg>
<div id="status">0 items selected</div>
<svg class="ic" style="left:1918px;top:1496px" width="4" height="28" viewBox="0 0 4 28" ><rect x="0" y="0.0" width="4" height="4" fill="#c9c0b0"/><rect x="0" y="8.0" width="4" height="4" fill="#c9c0b0"/><rect x="0" y="16.0" width="4" height="4" fill="#c9c0b0"/><rect x="0" y="24.0" width="4" height="4" fill="#c9c0b0"/></svg>
<svg class="ic" style="left:2490px;top:1496px" width="4" height="28" viewBox="0 0 4 28" ><rect x="0" y="0.0" width="4" height="4" fill="#c9c0b0"/><rect x="0" y="8.0" width="4" height="4" fill="#c9c0b0"/><rect x="0" y="16.0" width="4" height="4" fill="#c9c0b0"/><rect x="0" y="24.0" width="4" height="4" fill="#c9c0b0"/></svg>
<svg class="ic" style="left:2511px;top:1496px" width="10" height="30" viewBox="0 0 10 30" ><path d="M10 2 Q2 3 2 12 Q2 20 10 24" fill="#fbe3a1" stroke="#f0b95a" stroke-width="3"/><rect x="6" y="25" width="4" height="5" fill="#dfe6f5" stroke="#5a78b0" stroke-width="1"/></svg>
<svg style="position:absolute;left:0;top:0;z-index:50" width="2520" height="1526" viewBox="0 0 2520 1526"><path d="M262.0 305.7 L1348.2 470.0 L1349.1 464.3 L263.0 299.3 Z" fill="#fc2a1c"/><circle cx="262.5" cy="302.5" r="3.25" fill="#fc2a1c"/><path d="M1397.6 474.6 L1344.1 477.2 L1347.3 456.2 Z" fill="#fc2a1c"/><path d="M245.3 679.8 L1337.1 496.2 L1336.1 490.4 L244.3 673.4 Z" fill="#fc2a1c"/><circle cx="244.8" cy="676.6" r="3.25" fill="#fc2a1c"/><path d="M1385.4 485.1 L1335.4 504.2 L1331.9 483.3 Z" fill="#fc2a1c"/><path d="M248.3 1459.6 L1362.8 544.6 L1359.1 540.2 L244.1 1454.6 Z" fill="#fc2a1c"/><circle cx="246.2" cy="1457.1" r="3.25" fill="#fc2a1c"/><path d="M1399.2 511.0 L1365.3 552.5 L1351.9 536.1 Z" fill="#fc2a1c"/><text x="1418.2" y="448" font-family="DejaVu Sans, Liberation Sans, sans-serif" font-size="48.05" letter-spacing="0" style="letter-spacing:0" fill="#fc2a1c">Estructura de carpetas del modulo</text></svg>
</div></body></html>
